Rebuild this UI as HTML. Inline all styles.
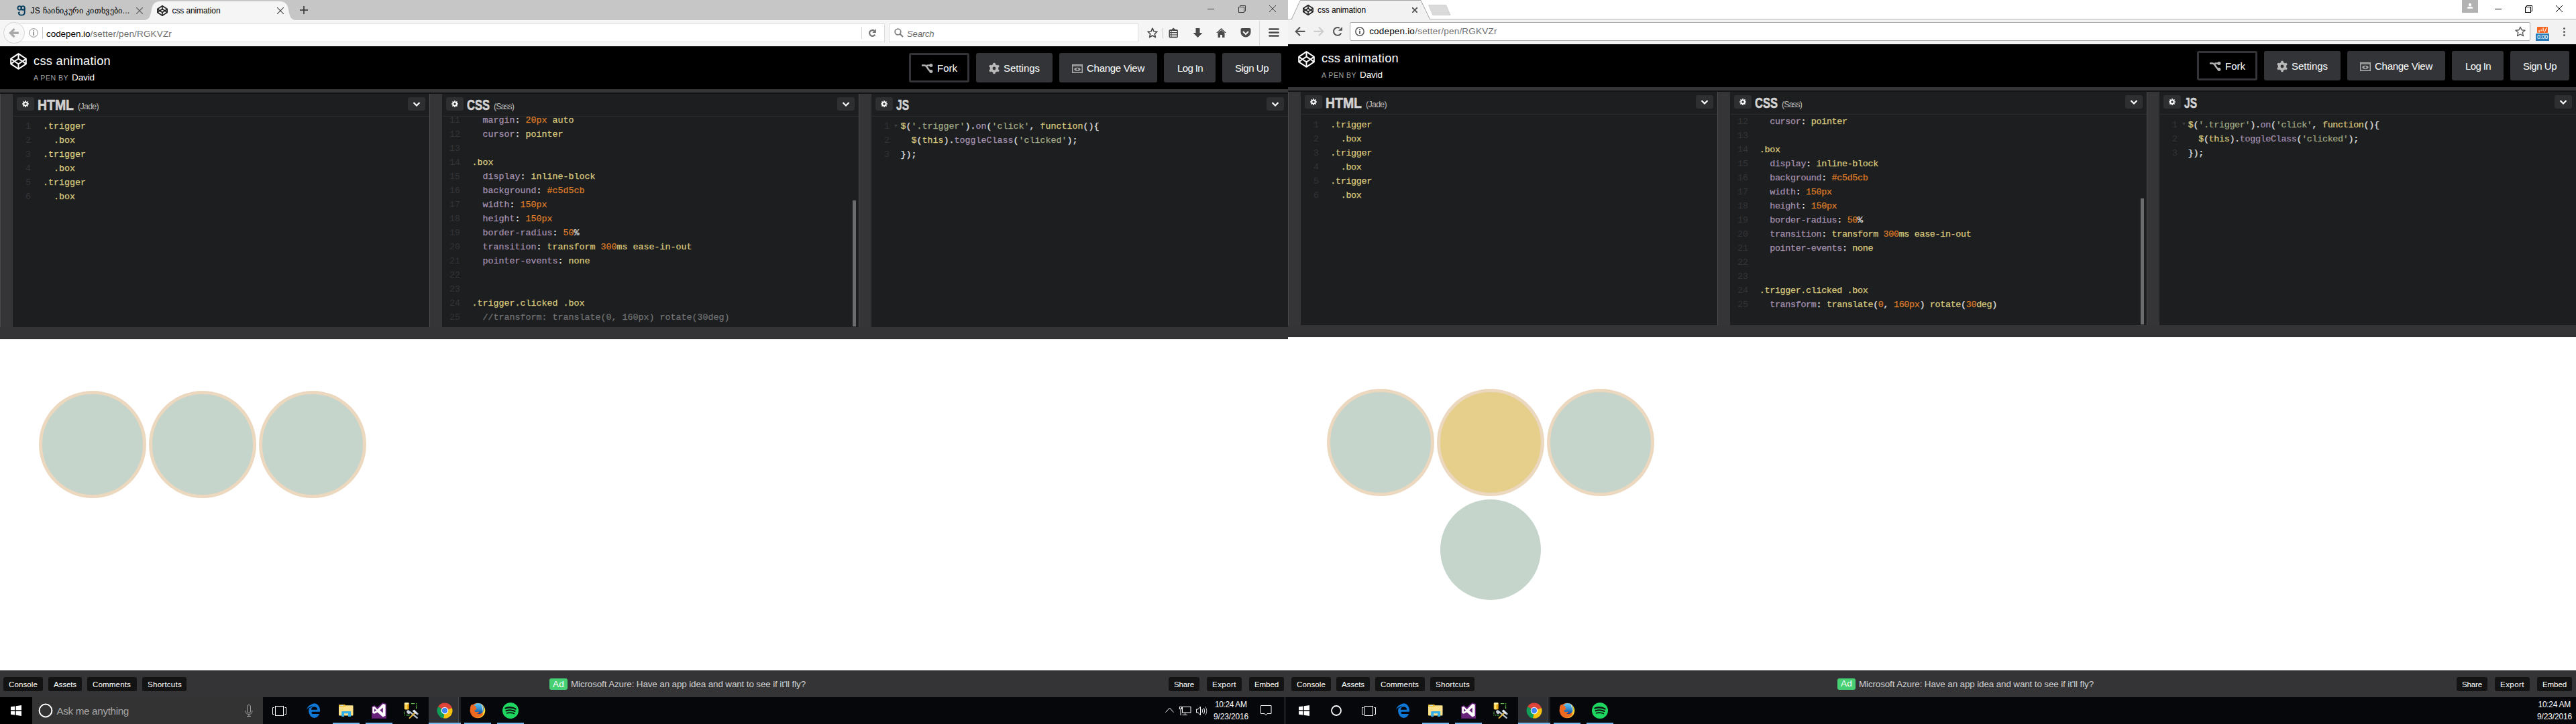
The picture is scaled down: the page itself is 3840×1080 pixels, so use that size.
<!DOCTYPE html><html><head><meta charset="utf-8"><style>html,body{margin:0;padding:0;background:#000;}body{width:3840px;height:1080px;position:relative;overflow:hidden;font-family:"Liberation Sans",sans-serif;}.scr{position:absolute;top:0;width:1920px;height:1080px;overflow:hidden;}.scr div,.scr svg{position:absolute;}.tx{white-space:nowrap;}</style></head><body><div class="scr" style="left:0"><div style="position:absolute;left:0px;top:0px;width:1920px;height:30px;background:#c6c6c6"></div><svg style="position:absolute;left:25px;top:8px;" width="14" height="16" viewBox="0 0 14 16"><g fill="none" stroke="#063f60" stroke-width="1.9"><ellipse cx="4.1" cy="4" rx="2.6" ry="2.9"/><ellipse cx="9.2" cy="4" rx="2.6" ry="2.9"/><path d="M11.7,3.7 L11.7,10.2 C11.7,13.4 9.6,14.6 7.1,14.6 C4.6,14.6 2.9,13.3 2.9,10.9 L4.4,9.9"/><path d="M6.6,6.2 L9.8,6.2"/></g></svg><div id="t1d6ca9dfcb" class="tx" style="left:45.5px;top:9.84px;font-size:12px;line-height:12px;color:#000;font-weight:400;font-family:'Liberation Sans', sans-serif;letter-spacing:0.305px;">JS ჩაინიკური კითხვები...</div><svg style="position:absolute;left:203px;top:11px;" width="10" height="10" viewBox="0 0 10 10"><g stroke="#555" stroke-width="1.1"><line x1="0" y1="0" x2="10" y2="10"/><line x1="10" y1="0" x2="0" y2="10"/></g></svg><svg style="position:absolute;left:200px;top:0px;" width="260" height="30" viewBox="0 0 260 30"><path d="M14,30 C22,30 24,26 26,14 C27.5,6 31,2 39,2 L217,2 C225,2 228.5,6 230,14 C232,26 234,30 242,30 Z" fill="#f5f5f5"/></svg><svg style="position:absolute;left:234px;top:8px;" width="16" height="16" viewBox="0 0 16 16"><g fill="none" stroke="#222" stroke-width="1.6" stroke-linejoin="round"><polygon points="8.00,0.77 15.23,5.50 15.23,10.50 8.00,15.23 0.77,10.50 0.77,5.50"/><polygon points="8.00,5.50 11.90,8.00 8.00,10.50 4.10,8.00"/><line x1="8.0" y1="0.768" x2="8.0" y2="5.504"/><line x1="8.0" y1="10.495999999999999" x2="8.0" y2="15.232000000000001"/><line x1="0.768" y1="5.504" x2="15.232000000000001" y2="10.495999999999999" stroke-opacity="0"/><polyline points="0.77,5.50 4.10,8.00 0.77,10.50"/><polyline points="15.23,5.50 11.90,8.00 15.23,10.50"/></g></svg><div id="tdc792264bf" class="tx" style="left:256.5px;top:9.84px;font-size:12px;line-height:12px;color:#000;font-weight:400;font-family:'Liberation Sans', sans-serif;letter-spacing:-0.106px;">css animation</div><svg style="position:absolute;left:413px;top:11px;" width="10" height="10" viewBox="0 0 10 10"><g stroke="#444" stroke-width="1.1"><line x1="0" y1="0" x2="10" y2="10"/><line x1="10" y1="0" x2="0" y2="10"/></g></svg><svg style="position:absolute;left:447px;top:9px;" width="12" height="12" viewBox="0 0 12 12"><g stroke="#333" stroke-width="1.6"><line x1="6" y1="0" x2="6" y2="12"/><line x1="0" y1="6" x2="12" y2="6"/></g></svg><div style="position:absolute;left:1800px;top:13px;width:10px;height:1px;background:#3a3a3a"></div><svg style="position:absolute;left:1846px;top:8px;" width="11" height="11" viewBox="0 0 11 11"><g fill="none" stroke="#3a3a3a" stroke-width="1"><rect x="0.5" y="2.5" width="8" height="8"/><polyline points="2.5,2.5 2.5,0.5 10.5,0.5 10.5,8.5 8.5,8.5"/></g></svg><svg style="position:absolute;left:1892px;top:8px;" width="10" height="10" viewBox="0 0 10 10"><g stroke="#3a3a3a" stroke-width="1"><line x1="0" y1="0" x2="10" y2="10"/><line x1="10" y1="0" x2="0" y2="10"/></g></svg><div style="position:absolute;left:0px;top:30px;width:1920px;height:39px;background:#f5f5f5"></div><div style="position:absolute;left:21px;top:35px;width:1298px;height:28px;box-sizing:border-box;border:1px solid #dedede;border-left:none;background:#fff"></div><div style="position:absolute;left:5.2px;top:33.2px;width:31.4px;height:31.4px;box-sizing:border-box;border:1px solid #d4d4d4;border-radius:50%;background:#f8f8f8"></div><svg style="position:absolute;left:13px;top:42px;" width="16" height="15" viewBox="0 0 16 15"><g stroke="#a9a9a9" fill="none"><polyline points="8.6,1.2 2.4,7.2 8.6,13.2" stroke-width="3.2"/><line x1="2.8" y1="7.2" x2="14.8" y2="7.2" stroke-width="3.5"/></g></svg><svg style="position:absolute;left:43px;top:42px;" width="14" height="14" viewBox="0 0 14 14"><circle cx="7" cy="7" r="6.3" fill="none" stroke="#8a8a8a" stroke-width="1"/><rect x="6.2" y="6" width="1.7" height="5" fill="#8a8a8a"/><rect x="6.2" y="3.2" width="1.7" height="1.7" fill="#8a8a8a"/></svg><div style="position:absolute;left:63px;top:40px;width:1px;height:18px;background:#c9c9c9"></div><div id="tf65abad30c" class="tx" style="left:69px;top:43.97px;font-size:13.5px;line-height:13.5px;color:#000;font-weight:400;font-family:'Liberation Sans', sans-serif;letter-spacing:-0.056px;white-space:nowrap">codepen.io</div><div id="tc8d14f2a52" class="tx" style="left:134.5px;top:43.97px;font-size:13.5px;line-height:13.5px;color:#6f6f6f;font-weight:400;font-family:'Liberation Sans', sans-serif;letter-spacing:0.164px;white-space:nowrap">/setter/pen/RGKVZr</div><div style="position:absolute;left:1284px;top:40px;width:1px;height:18px;background:#d8d8d8"></div><svg style="position:absolute;left:1294px;top:43px;" width="13" height="13" viewBox="0 0 13 13"><path d="M9.3,3.0 A4.4,4.4 0 1 0 10.3,8.6" fill="none" stroke="#777" stroke-width="2.3"/><polygon points="11.9,0.1 11.9,5.9 6.4,5.9" fill="#777"/></svg><div style="position:absolute;left:1325px;top:35px;width:372px;height:28px;box-sizing:border-box;border:1px solid #dedede;background:#fff"></div><svg style="position:absolute;left:1333px;top:42px;" width="14" height="14" viewBox="0 0 14 14"><circle cx="5.5" cy="5.5" r="4.3" fill="none" stroke="#808080" stroke-width="1.8"/><line x1="8.5" y1="8.5" x2="13" y2="13" stroke="#808080" stroke-width="2.2"/></svg><div id="t6a90bf6b0c" class="tx" style="left:1352px;top:43.62px;font-size:13.2px;line-height:13.2px;color:#6d6d6d;font-weight:400;font-family:'Liberation Sans', sans-serif;font-style:italic;letter-spacing:-0.216px;">Search</div><svg style="position:absolute;left:1710px;top:41px;" width="16" height="16" viewBox="0 0 16 16"><polygon points="8,1.2 10.1,5.8 15,6.2 11.3,9.5 12.4,14.6 8,12 3.6,14.6 4.7,9.5 1,6.2 5.9,5.8" fill="none" stroke="#4a4a4a" stroke-width="1.6" stroke-linejoin="round"/></svg><div style="position:absolute;left:1733px;top:42px;width:1px;height:15px;background:#c3c3c3"></div><svg style="position:absolute;left:1742px;top:41px;" width="15" height="16" viewBox="0 0 15 16"><rect x="0.5" y="3" width="13.5" height="12.5" rx="2" fill="#4a4a4a"/><polygon points="7.2,0.5 10,3 4.5,3" fill="#4a4a4a"/><g fill="#f5f5f5"><rect x="2" y="5" width="1.5" height="2"/><rect x="4.5" y="5" width="8" height="2"/><rect x="2" y="8.3" width="1.5" height="2"/><rect x="4.5" y="8.3" width="8" height="2"/><rect x="2" y="11.6" width="1.5" height="2"/><rect x="4.5" y="11.6" width="8" height="2"/></g></svg><svg style="position:absolute;left:1778px;top:42px;" width="15" height="14" viewBox="0 0 15 14"><polygon points="4.5,0 10.5,0 10.5,7 14.5,7 7.5,14 0.5,7 4.5,7" fill="#4a4a4a"/></svg><svg style="position:absolute;left:1813px;top:42px;" width="15" height="14" viewBox="0 0 15 14"><polygon points="7.5,0 15,7 13,7 7.5,2 2,7 0,7" fill="#4a4a4a"/><polygon points="2.5,7 7.5,2.8 12.5,7 12.5,14 9,14 9,10 6,10 6,14 2.5,14" fill="#4a4a4a"/></svg><svg style="position:absolute;left:1849px;top:42px;" width="16" height="14" viewBox="0 0 16 14"><path d="M0.5,2 Q0.5,0 2.5,0 L13.5,0 Q15.5,0 15.5,2 L15.5,6 A7.5,7.5 0 0 1 0.5,6 Z" fill="#4a4a4a"/><polyline points="4,5 8,9 12,5" fill="none" stroke="#f5f5f5" stroke-width="2"/></svg><div style="position:absolute;left:1877px;top:31px;width:1px;height:37px;background:#dcdcdc"></div><svg style="position:absolute;left:1891px;top:42px;" width="16" height="13" viewBox="0 0 16 13"><g stroke="#4a4a4a" stroke-width="2.6" stroke-linecap="round"><line x1="1.5" y1="1.5" x2="14.5" y2="1.5"/><line x1="1.5" y1="6.5" x2="14.5" y2="6.5"/><line x1="1.5" y1="11.5" x2="14.5" y2="11.5"/></g></svg><div style="position:absolute;left:0px;top:69px;width:1920px;height:64px;background:#000"></div><svg style="position:absolute;left:15px;top:79px;" width="25" height="25" viewBox="0 0 25 25"><g fill="none" stroke="#fff" stroke-width="2.0" stroke-linejoin="round"><polygon points="12.50,1.20 23.80,8.60 23.80,16.40 12.50,23.80 1.20,16.40 1.20,8.60"/><polygon points="12.50,8.60 18.60,12.50 12.50,16.40 6.40,12.50"/><line x1="12.5" y1="1.2" x2="12.5" y2="8.6"/><line x1="12.5" y1="16.4" x2="12.5" y2="23.8"/><line x1="1.2" y1="8.6" x2="23.8" y2="16.4" stroke-opacity="0"/><polyline points="1.20,8.60 6.40,12.50 1.20,16.40"/><polyline points="23.80,8.60 18.60,12.50 23.80,16.40"/></g></svg><div id="t0d46b7834b" class="tx" style="left:50px;top:82.29px;font-size:18.2px;line-height:18.2px;color:#fff;font-weight:400;font-family:'Liberation Sans', sans-serif;letter-spacing:0.292px;">css animation</div><div id="tba9e0ff49e" class="tx" style="left:50px;top:111.03px;font-size:10.6px;line-height:10.6px;color:#a0a0a0;font-weight:400;font-family:'Liberation Sans', sans-serif;letter-spacing:0.463px;">A PEN BY</div><div id="tf5e55506f2" class="tx" style="left:107px;top:109.29px;font-size:13.6px;line-height:13.6px;color:#fff;font-weight:400;font-family:'Liberation Sans', sans-serif;letter-spacing:-0.153px;">David</div><div style="position:absolute;left:1355px;top:79px;width:90px;height:44px;box-sizing:border-box;border:3px solid #333437;border-radius:3px;background:#000"></div><div style="position:absolute;left:1455px;top:79px;width:114px;height:44px;background:#333437;border-radius:3px"></div><div style="position:absolute;left:1579px;top:79px;width:146px;height:44px;background:#333437;border-radius:3px"></div><div style="position:absolute;left:1735px;top:79px;width:77px;height:44px;background:#333437;border-radius:3px"></div><div style="position:absolute;left:1822px;top:79px;width:88px;height:44px;background:#333437;border-radius:3px"></div><svg style="position:absolute;left:1373px;top:94px;" width="18" height="16" viewBox="0 0 18 16"><g fill="none" stroke="#b4b4b4" stroke-width="2.5"><path d="M1,3.6 L5,3.6 C7.5,3.6 8.2,5 10,8 C12,11 13,12.6 14.9,12.6"/><path d="M8.2,3.6 L14.9,3.6"/></g><circle cx="14.9" cy="3.6" r="2.5" fill="#b4b4b4"/><circle cx="14.9" cy="12.6" r="2.5" fill="#b4b4b4"/></svg><div id="tc6f41dcbe7" class="tx" style="left:1397px;top:94.30px;font-size:15px;line-height:15px;color:#fff;font-weight:400;font-family:'Liberation Sans', sans-serif;letter-spacing:0.000px;">Fork</div><svg style="position:absolute;left:1473px;top:93px;" width="18" height="18" viewBox="0 0 18 18"><circle cx="9" cy="9" r="6.23" fill="#b9b9b9"/><rect x="7.28" y="0.80" width="3.44" height="8.20" rx="1.03" fill="#b9b9b9" transform="rotate(0.0 9 9)"/><rect x="7.28" y="0.80" width="3.44" height="8.20" rx="1.03" fill="#b9b9b9" transform="rotate(60.0 9 9)"/><rect x="7.28" y="0.80" width="3.44" height="8.20" rx="1.03" fill="#b9b9b9" transform="rotate(120.0 9 9)"/><rect x="7.28" y="0.80" width="3.44" height="8.20" rx="1.03" fill="#b9b9b9" transform="rotate(180.0 9 9)"/><rect x="7.28" y="0.80" width="3.44" height="8.20" rx="1.03" fill="#b9b9b9" transform="rotate(240.0 9 9)"/><rect x="7.28" y="0.80" width="3.44" height="8.20" rx="1.03" fill="#b9b9b9" transform="rotate(300.0 9 9)"/><circle cx="9" cy="9" r="2.46" fill="#333437"/></svg><div id="tfad9ed803f" class="tx" style="left:1496px;top:94.30px;font-size:15px;line-height:15px;color:#fff;font-weight:400;font-family:'Liberation Sans', sans-serif;letter-spacing:-0.025px;">Settings</div><svg style="position:absolute;left:1598px;top:95.5px;" width="16" height="13" viewBox="0 0 16 13"><rect x="0.75" y="0.75" width="14.5" height="11.5" fill="none" stroke="#a8a8a8" stroke-width="1.5"/><line x1="1" y1="2.2" x2="15" y2="2.2" stroke="#a8a8a8" stroke-width="1.5"/><ellipse cx="8" cy="7.3" rx="4.6" ry="2.6" fill="#a8a8a8"/><circle cx="8" cy="7.3" r="1.5" fill="#333437"/></svg><div id="te60829a1ef" class="tx" style="left:1620px;top:94.30px;font-size:15px;line-height:15px;color:#fff;font-weight:400;font-family:'Liberation Sans', sans-serif;letter-spacing:-0.270px;">Change View</div><div id="t7902f28427" class="tx" style="left:1755px;top:94.30px;font-size:15px;line-height:15px;color:#fff;font-weight:400;font-family:'Liberation Sans', sans-serif;letter-spacing:-0.617px;">Log In</div><div id="tefbf89999e" class="tx" style="left:1841px;top:94.30px;font-size:15px;line-height:15px;color:#fff;font-weight:400;font-family:'Liberation Sans', sans-serif;letter-spacing:-0.482px;">Sign Up</div><div style="position:absolute;left:0px;top:133px;width:1920px;height:5px;background:#353537"></div><div style="position:absolute;left:0px;top:138px;width:1920px;height:2px;background:#141415"></div><div style="position:absolute;left:0px;top:138px;width:19px;height:350px;background:#353537"></div><div style="position:absolute;left:0px;top:138px;width:1px;height:350px;background:#4a4a4c"></div><div style="position:absolute;left:19px;top:140px;width:621px;height:348px;background:#1d1e20;overflow:hidden"></div><div style="position:absolute;left:19px;top:173px;width:621px;height:1px;background:#2a2b2d"></div><svg style="position:absolute;left:25px;top:145px;" width="26" height="20" viewBox="0 0 26 20"><rect x="0" y="0" width="26" height="20" rx="3" fill="#2e2f31"/><circle cx="13" cy="10" r="3.60" fill="#fff"/><rect x="12.15" y="5.00" width="1.70" height="5.00" rx="0.51" fill="#fff" transform="rotate(0.0 13 10)"/><rect x="12.15" y="5.00" width="1.70" height="5.00" rx="0.51" fill="#fff" transform="rotate(45.0 13 10)"/><rect x="12.15" y="5.00" width="1.70" height="5.00" rx="0.51" fill="#fff" transform="rotate(90.0 13 10)"/><rect x="12.15" y="5.00" width="1.70" height="5.00" rx="0.51" fill="#fff" transform="rotate(135.0 13 10)"/><rect x="12.15" y="5.00" width="1.70" height="5.00" rx="0.51" fill="#fff" transform="rotate(180.0 13 10)"/><rect x="12.15" y="5.00" width="1.70" height="5.00" rx="0.51" fill="#fff" transform="rotate(225.0 13 10)"/><rect x="12.15" y="5.00" width="1.70" height="5.00" rx="0.51" fill="#fff" transform="rotate(270.0 13 10)"/><rect x="12.15" y="5.00" width="1.70" height="5.00" rx="0.51" fill="#fff" transform="rotate(315.0 13 10)"/><circle cx="13" cy="10" r="1.70" fill="#2e2f31"/></svg><div id="tf0ba7d6132" class="tx" style="left:56px;top:145.54px;font-size:21.8px;line-height:21.8px;color:#d2d2d2;font-weight:700;font-family:'Liberation Sans', sans-serif;transform:scaleX(0.8921);transform-origin:0 0;-webkit-text-stroke:0.6px #d2d2d2;">HTML</div><div id="tef78362ea7" class="tx" style="left:116px;top:153.10px;font-size:12.4px;line-height:12.4px;color:#bdbdbd;font-weight:400;font-family:'Liberation Sans', sans-serif;letter-spacing:-0.688px;">(Jade)</div><svg style="position:absolute;left:608px;top:145px;" width="26" height="20" viewBox="0 0 26 20"><rect x="0" y="0" width="26" height="20" rx="3" fill="#2e2f31"/><polyline points="8.5,8 13,12.5 17.5,8" fill="none" stroke="#fff" stroke-width="2.2"/></svg><div style="position:absolute;left:640px;top:138px;width:19px;height:350px;background:#353537"></div><div style="position:absolute;left:640px;top:138px;width:1px;height:350px;background:#4a4a4c"></div><div style="position:absolute;left:659px;top:140px;width:621px;height:348px;background:#1d1e20;overflow:hidden"></div><div style="position:absolute;left:659px;top:173px;width:621px;height:1px;background:#2a2b2d"></div><svg style="position:absolute;left:665px;top:145px;" width="26" height="20" viewBox="0 0 26 20"><rect x="0" y="0" width="26" height="20" rx="3" fill="#2e2f31"/><circle cx="13" cy="10" r="3.60" fill="#fff"/><rect x="12.15" y="5.00" width="1.70" height="5.00" rx="0.51" fill="#fff" transform="rotate(0.0 13 10)"/><rect x="12.15" y="5.00" width="1.70" height="5.00" rx="0.51" fill="#fff" transform="rotate(45.0 13 10)"/><rect x="12.15" y="5.00" width="1.70" height="5.00" rx="0.51" fill="#fff" transform="rotate(90.0 13 10)"/><rect x="12.15" y="5.00" width="1.70" height="5.00" rx="0.51" fill="#fff" transform="rotate(135.0 13 10)"/><rect x="12.15" y="5.00" width="1.70" height="5.00" rx="0.51" fill="#fff" transform="rotate(180.0 13 10)"/><rect x="12.15" y="5.00" width="1.70" height="5.00" rx="0.51" fill="#fff" transform="rotate(225.0 13 10)"/><rect x="12.15" y="5.00" width="1.70" height="5.00" rx="0.51" fill="#fff" transform="rotate(270.0 13 10)"/><rect x="12.15" y="5.00" width="1.70" height="5.00" rx="0.51" fill="#fff" transform="rotate(315.0 13 10)"/><circle cx="13" cy="10" r="1.70" fill="#2e2f31"/></svg><div id="t0cad313c49" class="tx" style="left:696px;top:145.54px;font-size:21.8px;line-height:21.8px;color:#d2d2d2;font-weight:700;font-family:'Liberation Sans', sans-serif;transform:scaleX(0.7584);transform-origin:0 0;-webkit-text-stroke:0.6px #d2d2d2;">CSS</div><div id="t3cf34617bd" class="tx" style="left:736px;top:153.10px;font-size:12.4px;line-height:12.4px;color:#bdbdbd;font-weight:400;font-family:'Liberation Sans', sans-serif;letter-spacing:-0.969px;">(Sass)</div><svg style="position:absolute;left:1248px;top:145px;" width="26" height="20" viewBox="0 0 26 20"><rect x="0" y="0" width="26" height="20" rx="3" fill="#2e2f31"/><polyline points="8.5,8 13,12.5 17.5,8" fill="none" stroke="#fff" stroke-width="2.2"/></svg><div style="position:absolute;left:1280px;top:138px;width:19px;height:350px;background:#353537"></div><div style="position:absolute;left:1280px;top:138px;width:1px;height:350px;background:#4a4a4c"></div><div style="position:absolute;left:1299px;top:140px;width:621px;height:348px;background:#1d1e20;overflow:hidden"></div><div style="position:absolute;left:1299px;top:173px;width:621px;height:1px;background:#2a2b2d"></div><svg style="position:absolute;left:1305px;top:145px;" width="26" height="20" viewBox="0 0 26 20"><rect x="0" y="0" width="26" height="20" rx="3" fill="#2e2f31"/><circle cx="13" cy="10" r="3.60" fill="#fff"/><rect x="12.15" y="5.00" width="1.70" height="5.00" rx="0.51" fill="#fff" transform="rotate(0.0 13 10)"/><rect x="12.15" y="5.00" width="1.70" height="5.00" rx="0.51" fill="#fff" transform="rotate(45.0 13 10)"/><rect x="12.15" y="5.00" width="1.70" height="5.00" rx="0.51" fill="#fff" transform="rotate(90.0 13 10)"/><rect x="12.15" y="5.00" width="1.70" height="5.00" rx="0.51" fill="#fff" transform="rotate(135.0 13 10)"/><rect x="12.15" y="5.00" width="1.70" height="5.00" rx="0.51" fill="#fff" transform="rotate(180.0 13 10)"/><rect x="12.15" y="5.00" width="1.70" height="5.00" rx="0.51" fill="#fff" transform="rotate(225.0 13 10)"/><rect x="12.15" y="5.00" width="1.70" height="5.00" rx="0.51" fill="#fff" transform="rotate(270.0 13 10)"/><rect x="12.15" y="5.00" width="1.70" height="5.00" rx="0.51" fill="#fff" transform="rotate(315.0 13 10)"/><circle cx="13" cy="10" r="1.70" fill="#2e2f31"/></svg><div id="t257a75b3f7" class="tx" style="left:1336px;top:145.54px;font-size:21.8px;line-height:21.8px;color:#d2d2d2;font-weight:700;font-family:'Liberation Sans', sans-serif;transform:scaleX(0.7123);transform-origin:0 0;-webkit-text-stroke:0.6px #d2d2d2;">JS</div><svg style="position:absolute;left:1888px;top:145px;" width="26" height="20" viewBox="0 0 26 20"><rect x="0" y="0" width="26" height="20" rx="3" fill="#2e2f31"/><polyline points="8.5,8 13,12.5 17.5,8" fill="none" stroke="#fff" stroke-width="2.2"/></svg><div style="position:absolute;left:640px;top:138px;width:1px;height:350px;background:#4e4e50"></div><div style="position:absolute;left:1280px;top:138px;width:1px;height:350px;background:#4e4e50"></div><div style="position:absolute;left:0px;top:138px;width:1920px;height:2px;background:#141415"></div><div style="position:absolute;left:19px;top:174px;width:621px;height:314px;overflow:hidden"><div class="tx" style="left:-33px;width:60px;text-align:right;top:7.79px;font-size:13.333px;line-height:13.333px;font-family:'Liberation Mono', monospace;color:#333437">1</div><div class="tx" style="left:45px;top:7.79px;font-size:13.333px;line-height:13.333px;font-family:'Liberation Mono', monospace;white-space:pre;letter-spacing:0.000px;-webkit-text-stroke-width:0.25px"><span style="color:#dccb7f">.trigger</span></div><div class="tx" style="left:-33px;width:60px;text-align:right;top:28.79px;font-size:13.333px;line-height:13.333px;font-family:'Liberation Mono', monospace;color:#333437">2</div><div class="tx" style="left:45px;top:28.79px;font-size:13.333px;line-height:13.333px;font-family:'Liberation Mono', monospace;white-space:pre;letter-spacing:0.000px;-webkit-text-stroke-width:0.25px"><span style="color:#dccb7f">  .box</span></div><div class="tx" style="left:-33px;width:60px;text-align:right;top:49.79px;font-size:13.333px;line-height:13.333px;font-family:'Liberation Mono', monospace;color:#333437">3</div><div class="tx" style="left:45px;top:49.79px;font-size:13.333px;line-height:13.333px;font-family:'Liberation Mono', monospace;white-space:pre;letter-spacing:0.000px;-webkit-text-stroke-width:0.25px"><span style="color:#dccb7f">.trigger</span></div><div class="tx" style="left:-33px;width:60px;text-align:right;top:70.79px;font-size:13.333px;line-height:13.333px;font-family:'Liberation Mono', monospace;color:#333437">4</div><div class="tx" style="left:45px;top:70.79px;font-size:13.333px;line-height:13.333px;font-family:'Liberation Mono', monospace;white-space:pre;letter-spacing:0.000px;-webkit-text-stroke-width:0.25px"><span style="color:#dccb7f">  .box</span></div><div class="tx" style="left:-33px;width:60px;text-align:right;top:91.79px;font-size:13.333px;line-height:13.333px;font-family:'Liberation Mono', monospace;color:#333437">5</div><div class="tx" style="left:45px;top:91.79px;font-size:13.333px;line-height:13.333px;font-family:'Liberation Mono', monospace;white-space:pre;letter-spacing:0.000px;-webkit-text-stroke-width:0.25px"><span style="color:#dccb7f">.trigger</span></div><div class="tx" style="left:-33px;width:60px;text-align:right;top:112.79px;font-size:13.333px;line-height:13.333px;font-family:'Liberation Mono', monospace;color:#333437">6</div><div class="tx" style="left:45px;top:112.79px;font-size:13.333px;line-height:13.333px;font-family:'Liberation Mono', monospace;white-space:pre;letter-spacing:0.000px;-webkit-text-stroke-width:0.25px"><span style="color:#dccb7f">  .box</span></div></div><div style="position:absolute;left:659px;top:174px;width:621px;height:314px;overflow:hidden"><div class="tx" style="left:-33px;width:60px;text-align:right;top:-22.21px;font-size:13.333px;line-height:13.333px;font-family:'Liberation Mono', monospace;color:#333437">10</div><div class="tx" style="left:44.5px;top:-22.21px;font-size:13.333px;line-height:13.333px;font-family:'Liberation Mono', monospace;white-space:pre;letter-spacing:0.000px;-webkit-text-stroke-width:0.25px"><span style="color:#e0e0e0">  </span><span style="color:#a592b1">display</span><span style="color:#e0e0e0">: </span><span style="color:#dccb7f">inline-block</span></div><div class="tx" style="left:-33px;width:60px;text-align:right;top:-1.21px;font-size:13.333px;line-height:13.333px;font-family:'Liberation Mono', monospace;color:#333437">11</div><div class="tx" style="left:44.5px;top:-1.21px;font-size:13.333px;line-height:13.333px;font-family:'Liberation Mono', monospace;white-space:pre;letter-spacing:0.000px;-webkit-text-stroke-width:0.25px"><span style="color:#e0e0e0">  </span><span style="color:#a592b1">margin</span><span style="color:#e0e0e0">: </span><span style="color:#dd7c28">20px</span><span style="color:#e0e0e0"> </span><span style="color:#dccb7f">auto</span></div><div class="tx" style="left:-33px;width:60px;text-align:right;top:19.79px;font-size:13.333px;line-height:13.333px;font-family:'Liberation Mono', monospace;color:#333437">12</div><div class="tx" style="left:44.5px;top:19.79px;font-size:13.333px;line-height:13.333px;font-family:'Liberation Mono', monospace;white-space:pre;letter-spacing:0.000px;-webkit-text-stroke-width:0.25px"><span style="color:#e0e0e0">  </span><span style="color:#a592b1">cursor</span><span style="color:#e0e0e0">: </span><span style="color:#dccb7f">pointer</span></div><div class="tx" style="left:-33px;width:60px;text-align:right;top:40.79px;font-size:13.333px;line-height:13.333px;font-family:'Liberation Mono', monospace;color:#333437">13</div><div class="tx" style="left:44.5px;top:40.79px;font-size:13.333px;line-height:13.333px;font-family:'Liberation Mono', monospace;white-space:pre;letter-spacing:0.000px;-webkit-text-stroke-width:0.25px"></div><div class="tx" style="left:-33px;width:60px;text-align:right;top:61.79px;font-size:13.333px;line-height:13.333px;font-family:'Liberation Mono', monospace;color:#333437">14</div><div class="tx" style="left:44.5px;top:61.79px;font-size:13.333px;line-height:13.333px;font-family:'Liberation Mono', monospace;white-space:pre;letter-spacing:0.000px;-webkit-text-stroke-width:0.25px"><span style="color:#dccb7f">.box</span></div><div class="tx" style="left:-33px;width:60px;text-align:right;top:82.79px;font-size:13.333px;line-height:13.333px;font-family:'Liberation Mono', monospace;color:#333437">15</div><div class="tx" style="left:44.5px;top:82.79px;font-size:13.333px;line-height:13.333px;font-family:'Liberation Mono', monospace;white-space:pre;letter-spacing:0.000px;-webkit-text-stroke-width:0.25px"><span style="color:#e0e0e0">  </span><span style="color:#a592b1">display</span><span style="color:#e0e0e0">: </span><span style="color:#dccb7f">inline-block</span></div><div class="tx" style="left:-33px;width:60px;text-align:right;top:103.79px;font-size:13.333px;line-height:13.333px;font-family:'Liberation Mono', monospace;color:#333437">16</div><div class="tx" style="left:44.5px;top:103.79px;font-size:13.333px;line-height:13.333px;font-family:'Liberation Mono', monospace;white-space:pre;letter-spacing:0.000px;-webkit-text-stroke-width:0.25px"><span style="color:#e0e0e0">  </span><span style="color:#a592b1">background</span><span style="color:#e0e0e0">: </span><span style="color:#dd7c28">#c5d5cb</span></div><div class="tx" style="left:-33px;width:60px;text-align:right;top:124.79px;font-size:13.333px;line-height:13.333px;font-family:'Liberation Mono', monospace;color:#333437">17</div><div class="tx" style="left:44.5px;top:124.79px;font-size:13.333px;line-height:13.333px;font-family:'Liberation Mono', monospace;white-space:pre;letter-spacing:0.000px;-webkit-text-stroke-width:0.25px"><span style="color:#e0e0e0">  </span><span style="color:#a592b1">width</span><span style="color:#e0e0e0">: </span><span style="color:#dd7c28">150px</span></div><div class="tx" style="left:-33px;width:60px;text-align:right;top:145.79px;font-size:13.333px;line-height:13.333px;font-family:'Liberation Mono', monospace;color:#333437">18</div><div class="tx" style="left:44.5px;top:145.79px;font-size:13.333px;line-height:13.333px;font-family:'Liberation Mono', monospace;white-space:pre;letter-spacing:0.000px;-webkit-text-stroke-width:0.25px"><span style="color:#e0e0e0">  </span><span style="color:#a592b1">height</span><span style="color:#e0e0e0">: </span><span style="color:#dd7c28">150px</span></div><div class="tx" style="left:-33px;width:60px;text-align:right;top:166.79px;font-size:13.333px;line-height:13.333px;font-family:'Liberation Mono', monospace;color:#333437">19</div><div class="tx" style="left:44.5px;top:166.79px;font-size:13.333px;line-height:13.333px;font-family:'Liberation Mono', monospace;white-space:pre;letter-spacing:0.000px;-webkit-text-stroke-width:0.25px"><span style="color:#e0e0e0">  </span><span style="color:#a592b1">border-radius</span><span style="color:#e0e0e0">: </span><span style="color:#dd7c28">50</span><span style="color:#e0e0e0">%</span></div><div class="tx" style="left:-33px;width:60px;text-align:right;top:187.79px;font-size:13.333px;line-height:13.333px;font-family:'Liberation Mono', monospace;color:#333437">20</div><div class="tx" style="left:44.5px;top:187.79px;font-size:13.333px;line-height:13.333px;font-family:'Liberation Mono', monospace;white-space:pre;letter-spacing:0.000px;-webkit-text-stroke-width:0.25px"><span style="color:#e0e0e0">  </span><span style="color:#a592b1">transition</span><span style="color:#e0e0e0">: </span><span style="color:#dccb7f">transform</span><span style="color:#e0e0e0"> </span><span style="color:#dd7c28">300</span><span style="color:#dccb7f">ms</span><span style="color:#e0e0e0"> </span><span style="color:#dccb7f">ease-in-out</span></div><div class="tx" style="left:-33px;width:60px;text-align:right;top:208.79px;font-size:13.333px;line-height:13.333px;font-family:'Liberation Mono', monospace;color:#333437">21</div><div class="tx" style="left:44.5px;top:208.79px;font-size:13.333px;line-height:13.333px;font-family:'Liberation Mono', monospace;white-space:pre;letter-spacing:0.000px;-webkit-text-stroke-width:0.25px"><span style="color:#e0e0e0">  </span><span style="color:#a592b1">pointer-events</span><span style="color:#e0e0e0">: </span><span style="color:#dccb7f">none</span></div><div class="tx" style="left:-33px;width:60px;text-align:right;top:229.79px;font-size:13.333px;line-height:13.333px;font-family:'Liberation Mono', monospace;color:#333437">22</div><div class="tx" style="left:44.5px;top:229.79px;font-size:13.333px;line-height:13.333px;font-family:'Liberation Mono', monospace;white-space:pre;letter-spacing:0.000px;-webkit-text-stroke-width:0.25px"></div><div class="tx" style="left:-33px;width:60px;text-align:right;top:250.79px;font-size:13.333px;line-height:13.333px;font-family:'Liberation Mono', monospace;color:#333437">23</div><div class="tx" style="left:44.5px;top:250.79px;font-size:13.333px;line-height:13.333px;font-family:'Liberation Mono', monospace;white-space:pre;letter-spacing:0.000px;-webkit-text-stroke-width:0.25px"></div><div class="tx" style="left:-33px;width:60px;text-align:right;top:271.79px;font-size:13.333px;line-height:13.333px;font-family:'Liberation Mono', monospace;color:#333437">24</div><div class="tx" style="left:44.5px;top:271.79px;font-size:13.333px;line-height:13.333px;font-family:'Liberation Mono', monospace;white-space:pre;letter-spacing:0.000px;-webkit-text-stroke-width:0.25px"><span style="color:#dccb7f">.trigger.clicked .box</span></div><div class="tx" style="left:-33px;width:60px;text-align:right;top:292.79px;font-size:13.333px;line-height:13.333px;font-family:'Liberation Mono', monospace;color:#333437">25</div><div class="tx" style="left:44.5px;top:292.79px;font-size:13.333px;line-height:13.333px;font-family:'Liberation Mono', monospace;white-space:pre;letter-spacing:0.000px;-webkit-text-stroke-width:0.25px"><span style="color:#727272">  //transform: translate(0, 160px) rotate(30deg)</span></div></div><div style="position:absolute;left:1271px;top:299px;width:5px;height:188px;background:#6c6c6c"></div><div style="position:absolute;left:1299px;top:174px;width:621px;height:314px;overflow:hidden"><div class="tx" style="left:-33px;width:60px;text-align:right;top:7.79px;font-size:13.333px;line-height:13.333px;font-family:'Liberation Mono', monospace;color:#333437">1</div><div class="tx" style="left:43.5px;top:7.79px;font-size:13.333px;line-height:13.333px;font-family:'Liberation Mono', monospace;white-space:pre;letter-spacing:0.000px;-webkit-text-stroke-width:0.25px"><span style="color:#dccb7f">$</span><span style="color:#e0e0e0">(</span><span style="color:#a3ab86">'.trigger'</span><span style="color:#e0e0e0">)</span><span style="color:#e0e0e0">.</span><span style="color:#a592b1">on</span><span style="color:#e0e0e0">(</span><span style="color:#a3ab86">'click'</span><span style="color:#e0e0e0">, </span><span style="color:#dccb7f">function</span><span style="color:#e0e0e0">(){</span></div><div class="tx" style="left:-33px;width:60px;text-align:right;top:28.79px;font-size:13.333px;line-height:13.333px;font-family:'Liberation Mono', monospace;color:#333437">2</div><div class="tx" style="left:43.5px;top:28.79px;font-size:13.333px;line-height:13.333px;font-family:'Liberation Mono', monospace;white-space:pre;letter-spacing:0.000px;-webkit-text-stroke-width:0.25px"><span style="color:#e0e0e0">  </span><span style="color:#dccb7f">$</span><span style="color:#e0e0e0">(</span><span style="color:#dccb7f">this</span><span style="color:#e0e0e0">)</span><span style="color:#e0e0e0">.</span><span style="color:#a592b1">toggleClass</span><span style="color:#e0e0e0">(</span><span style="color:#a3ab86">'clicked'</span><span style="color:#e0e0e0">);</span></div><div class="tx" style="left:-33px;width:60px;text-align:right;top:49.79px;font-size:13.333px;line-height:13.333px;font-family:'Liberation Mono', monospace;color:#333437">3</div><div class="tx" style="left:43.5px;top:49.79px;font-size:13.333px;line-height:13.333px;font-family:'Liberation Mono', monospace;white-space:pre;letter-spacing:0.000px;-webkit-text-stroke-width:0.25px"><span style="color:#e0e0e0">});</span></div><svg style="position:absolute;left:34px;top:12px;" width="5" height="4" viewBox="0 0 5 4"><polygon points="0,0 5,0 2.5,4" fill="#3e3f41"/></svg></div><div style="position:absolute;left:0px;top:488px;width:1920px;height:16px;background:#343436"></div><div style="position:absolute;left:0px;top:504px;width:1920px;height:1px;background:#000"></div><div style="position:absolute;left:0px;top:505px;width:1920px;height:1px;background:#6a6a6a"></div><div style="position:absolute;left:0px;top:506px;width:1920px;height:494px;background:#fff"></div><div style="position:absolute;left:58px;top:583px;width:160px;height:160px;box-sizing:border-box;border:5px solid #ebd8bf;border-radius:50%;background:#c5d5cb"></div><div style="position:absolute;left:222px;top:583px;width:160px;height:160px;box-sizing:border-box;border:5px solid #ebd8bf;border-radius:50%;background:#c5d5cb"></div><div style="position:absolute;left:386px;top:583px;width:160px;height:160px;box-sizing:border-box;border:5px solid #ebd8bf;border-radius:50%;background:#c5d5cb"></div><div style="position:absolute;left:0px;top:1000px;width:1920px;height:40px;background:#343436"></div><div style="position:absolute;left:5px;top:1010px;width:59px;height:21px;background:#131314;border-radius:3px"></div><div id="tbda0d0c456" class="tx" style="left:13px;top:1015.18px;font-size:11.6px;line-height:11.6px;color:#fff;font-weight:400;font-family:'Liberation Sans', sans-serif;letter-spacing:0.065px;">Console</div><div style="position:absolute;left:72px;top:1010px;width:50px;height:21px;background:#131314;border-radius:3px"></div><div id="t57291a721c" class="tx" style="left:80px;top:1015.18px;font-size:11.6px;line-height:11.6px;color:#fff;font-weight:400;font-family:'Liberation Sans', sans-serif;letter-spacing:-0.133px;">Assets</div><div style="position:absolute;left:130px;top:1010px;width:74px;height:21px;background:#131314;border-radius:3px"></div><div id="t4354915cce" class="tx" style="left:138px;top:1015.18px;font-size:11.6px;line-height:11.6px;color:#fff;font-weight:400;font-family:'Liberation Sans', sans-serif;letter-spacing:0.117px;">Comments</div><div style="position:absolute;left:212px;top:1010px;width:66px;height:21px;background:#131314;border-radius:3px"></div><div id="t47fc4de78f" class="tx" style="left:220px;top:1015.18px;font-size:11.6px;line-height:11.6px;color:#fff;font-weight:400;font-family:'Liberation Sans', sans-serif;letter-spacing:0.224px;">Shortcuts</div><div style="position:absolute;left:1742px;top:1010px;width:46px;height:21px;background:#131314;border-radius:3px"></div><div id="t7a724faf32" class="tx" style="left:1750px;top:1015.18px;font-size:11.6px;line-height:11.6px;color:#fff;font-weight:400;font-family:'Liberation Sans', sans-serif;letter-spacing:-0.188px;">Share</div><div style="position:absolute;left:1799px;top:1010px;width:52px;height:21px;background:#131314;border-radius:3px"></div><div id="t10c9bdf545" class="tx" style="left:1807px;top:1015.18px;font-size:11.6px;line-height:11.6px;color:#fff;font-weight:400;font-family:'Liberation Sans', sans-serif;letter-spacing:0.414px;">Export</div><div style="position:absolute;left:1862px;top:1010px;width:52px;height:21px;background:#131314;border-radius:3px"></div><div id="ta988d7e062" class="tx" style="left:1870px;top:1015.18px;font-size:11.6px;line-height:11.6px;color:#fff;font-weight:400;font-family:'Liberation Sans', sans-serif;letter-spacing:-0.147px;">Embed</div><div style="position:absolute;left:819px;top:1012px;width:27px;height:17px;background:#47cf73;border-radius:3px"></div><div id="t3ec698897f" class="tx" style="left:824px;top:1014.09px;font-size:13.6px;line-height:13.6px;color:#fff;font-weight:400;font-family:'Liberation Sans', sans-serif;letter-spacing:0.180px;">Ad</div><div id="tc0448246d5" class="tx" style="left:851px;top:1014.25px;font-size:13.4px;line-height:13.4px;color:#d2d2d2;font-weight:400;font-family:'Liberation Sans', sans-serif;letter-spacing:-0.109px;">Microsoft Azure: Have an app idea and want to see if it'll fly?</div><div style="position:absolute;left:0px;top:1040px;width:1920px;height:40px;background:#05070b"></div><div style="position:absolute;left:0px;top:1040px;width:48px;height:40px;background:#000"></div><svg style="position:absolute;left:16px;top:1052px;" width="16" height="16" viewBox="0 0 16 16"><g fill="#fff"><polygon points="0,2.3 6.3,1.4 6.3,7.3 0,7.3"/><polygon points="7.7,1.2 16,0 16,7.3 7.7,7.3"/><polygon points="0,8.7 6.3,8.7 6.3,14.6 0,13.7"/><polygon points="7.7,8.7 16,8.7 16,16 7.7,14.8"/></g></svg><div style="position:absolute;left:48px;top:1040px;width:344px;height:40px;background:#333"></div><svg style="position:absolute;left:57px;top:1049px;" width="22" height="22" viewBox="0 0 22 22"><circle cx="11" cy="11" r="9.4" fill="none" stroke="#fff" stroke-width="2"/></svg><div id="t45d0c09ff8" class="tx" style="left:84.5px;top:1053.13px;font-size:15.2px;line-height:15.2px;color:#a6a6a6;font-weight:400;font-family:'Liberation Sans', sans-serif;letter-spacing:-0.319px;">Ask me anything</div><svg style="position:absolute;left:365px;top:1051px;" width="12" height="19" viewBox="0 0 12 19"><g fill="none" stroke="#a0a0a0" stroke-width="1"><rect x="3.5" y="0.5" width="5" height="12" rx="2.5"/><path d="M1,9 Q1,14.5 6,14.5 Q11,14.5 11,9"/><line x1="6" y1="14.5" x2="6" y2="17.5"/><line x1="3" y1="17.5" x2="9" y2="17.5"/></g></svg><div style="position:absolute;left:639px;top:1040px;width:44px;height:40px;background:#303134"></div><div style="position:absolute;left:683px;top:1040px;width:1px;height:40px;background:#46474a"></div><div style="position:absolute;left:684px;top:1040px;width:3px;height:40px;background:#1e1f22"></div><svg style="position:absolute;left:406px;top:1053px;" width="21" height="15" viewBox="0 0 21 15"><g fill="none" stroke="#fff" stroke-width="1"><rect x="4.5" y="0.5" width="12" height="14"/><polyline points="2.5,2.5 0.5,2.5 0.5,12.5 2.5,12.5"/><polyline points="18.5,2.5 20.5,2.5 20.5,12.5 18.5,12.5"/></g></svg><svg style="position:absolute;left:457px;top:1048.9px;" width="21" height="23" viewBox="0 0 21 23"><ellipse cx="11.6" cy="11.2" rx="8.55" ry="10.85" fill="#0f78d7"/><path d="M7,9.8 C7,6.8 9.2,5.2 11.6,5.2 C14,5.2 16.2,6.8 16.2,9.8 Z" fill="#03050a"/><path d="M21,12.8 L8,12.8 C7.4,13.8 7.5,15 8.3,16 L21,16 Z" fill="#03050a"/><path d="M0.2,10.2 C0.9,6 3.8,2.6 8.6,1.6 L9.2,4.6 C5.2,5.2 2.2,7.2 0.2,10.2 Z" fill="#0f78d7"/><path d="M0.6,10 C2.4,7.4 5,5.6 8.6,5" fill="none" stroke="#03050a" stroke-width="1.1"/></svg><svg style="position:absolute;left:505.25px;top:1051px;" width="22" height="19" viewBox="0 0 22 19"><rect x="0" y="1.2" width="21.5" height="15.2" rx="0.8" fill="#fde18a"/><path d="M0,2.9 L0,0.9 Q0,0 0.9,0 L9.2,0 L10.6,1.6 L10.6,2.9 Z" fill="#f1c232"/><rect x="2.2" y="1" width="4.8" height="1" fill="#bfe3f0"/><path d="M4.2,18 L4.2,11 Q4.2,10 5.2,10 L17.1,10 Q18.1,10 18.1,11 L18.1,18 L14,18 L14,13.3 L8.2,13.3 L8.2,18 Z" fill="#35aee8"/></svg><svg style="position:absolute;left:553.8px;top:1048.15px;" width="23" height="24" viewBox="0 0 23 24"><polygon points="0.2,6 4,4 8.4,7.1 16.6,0 22.1,2 22.1,23.7 0.2,23.7" fill="#68217a"/><path d="M1.33,6.86 L3.98,5.75 L8.63,10.18 L16.8,1.99 L20.6,2.88 L20.6,19.7 L16.8,21.5 L8.63,14.4 L3.98,16.8 L1.33,15.7 Z M3.98,9.07 L3.98,14 L7.08,11.5 Z M12.2,11.5 L16.8,15.5 L16.8,7.52 Z" fill="#fff" fill-rule="evenodd"/></svg><svg style="position:absolute;left:602px;top:1048px;" width="25" height="25" viewBox="0 0 25 25"><defs><linearGradient id="tcyl" x1="0" x2="1"><stop offset="0" stop-color="#f0c030"/><stop offset="0.4" stop-color="#fbe07a"/><stop offset="0.6" stop-color="#f3b51c"/><stop offset="1" stop-color="#d99000"/></linearGradient></defs><rect x="0.7" y="0" width="7.1" height="10.4" rx="1.6" fill="url(#tcyl)"/><ellipse cx="4.25" cy="1.4" rx="3.3" ry="1.3" fill="#fff3b0"/><g fill="#5cc84a"><rect x="10.8" y="1" width="5.5" height="1.2"/><rect x="18" y="1" width="1.2" height="1.2"/><rect x="18" y="3.4" width="1.2" height="1.2"/><rect x="18" y="5.5" width="1.2" height="3.6"/><rect x="0.4" y="13.5" width="1.2" height="1.5"/><rect x="0.4" y="16" width="1.2" height="1.2"/><rect x="0.4" y="18.2" width="1.2" height="1.2"/><rect x="3" y="18.2" width="1.2" height="1.2"/><rect x="5" y="18.2" width="3.8" height="1.2"/></g><line x1="8.6" y1="13.6" x2="19.8" y2="22.8" stroke="#b9c3cf" stroke-width="2.3" stroke-linecap="round"/><path d="M4.8,11.8 A3.2,3.2 0 1 0 10.5,14.2 L8.6,13.6 L7.4,11 Z" fill="#c8d0da"/><line x1="8.6" y1="23" x2="16.5" y2="15.6" stroke="#e3b33a" stroke-width="2" stroke-linecap="round"/><path d="M12.5,12.8 L15.5,10.6 L21.8,16.8 L20.2,18.8 L16.8,16.2 Z" fill="#dfe6ee"/><path d="M18.5,16.5 L21.8,16.8 L20.2,18.8 Z" fill="#8d9aa8"/></svg><svg style="position:absolute;left:0;top:0" width="1920" height="1080"><path d="M663,1060 L653.04,1054.25 A11.5,11.5 0 0 1 673.81,1056.07 Z" fill="#db4437"/><path d="M663,1060 L673.81,1056.07 A11.5,11.5 0 0 1 661.00,1071.33 Z" fill="#f4c20d"/><path d="M663,1060 L661.00,1071.33 A11.5,11.5 0 0 1 653.04,1054.25 Z" fill="#0f9d58"/><circle cx="663" cy="1060" r="5.29" fill="#fff"/><circle cx="663" cy="1060" r="4.14" fill="#4285f4"/><defs><linearGradient id="ffo" x1="0" y1="0" x2="1" y2="0.3"><stop offset="0" stop-color="#e2481b"/><stop offset="0.6" stop-color="#f27a20"/><stop offset="1" stop-color="#ffd52e"/></linearGradient><linearGradient id="ffb" x1="0" y1="0" x2="0" y2="1"><stop offset="0" stop-color="#5fcaf4"/><stop offset="0.55" stop-color="#2a87d0"/><stop offset="1" stop-color="#173a88"/></linearGradient></defs><circle cx="712" cy="1060" r="11.3" fill="url(#ffo)"/><circle cx="712.9" cy="1057.4" r="8.4" fill="url(#ffb)"/><polygon points="701.10,1054.70 702.10,1051.80 704.30,1050.90 706.55,1053.10 708.80,1052.50 709.60,1055.80 711.00,1056.20 708.80,1059.10 707.00,1060.00 708.80,1062.20 713.20,1061.70 714.10,1063.10 710.50,1065.30 716.70,1065.10 719.40,1062.20 719.80,1066.70 712.80,1070.70 704.80,1067.70 700.80,1060.70" fill="#ee6a20"/><path d="M717.3,1050.2 Q721.3,1053.7 720.0,1063.2 Q719.3,1056.7 717.3,1050.2 Z" fill="#fff6c0" fill-opacity="0.85"/><circle cx="761" cy="1060" r="12" fill="#1ed760"/><g fill="none" stroke="#111" stroke-linecap="round"><path d="M753.5,1056.5 Q761,1053.5 768.5,1057.5" stroke-width="2.4"/><path d="M754.5,1060.3 Q761,1058 767.5,1061" stroke-width="2"/><path d="M755.5,1063.8 Q761,1062 766.5,1064.5" stroke-width="1.7"/></g></svg><div style="position:absolute;left:496px;top:1078px;width:40px;height:2px;background:#76b9ed"></div><div style="position:absolute;left:545px;top:1078px;width:40px;height:2px;background:#76b9ed"></div><div style="position:absolute;left:639px;top:1078px;width:48px;height:2px;background:#76b9ed"></div><div style="position:absolute;left:692px;top:1078px;width:40px;height:2px;background:#76b9ed"></div><div style="position:absolute;left:741px;top:1078px;width:40px;height:2px;background:#76b9ed"></div><svg style="position:absolute;left:1737px;top:1055px;" width="13" height="8" viewBox="0 0 13 8"><polyline points="0.5,7.5 6.5,1 12.5,7.5" fill="none" stroke="#fff" stroke-width="1"/></svg><svg style="position:absolute;left:1758px;top:1054px;" width="18" height="14" viewBox="0 0 18 14"><g fill="none" stroke="#fff" stroke-width="1"><rect x="4.5" y="0.5" width="12.5" height="8.5"/><rect x="0.5" y="0.5" width="3" height="3"/><line x1="2" y1="3.5" x2="2" y2="13"/><line x1="4.5" y1="12.5" x2="12" y2="12.5"/><line x1="8.5" y1="9" x2="8.5" y2="12.5"/></g></svg><svg style="position:absolute;left:1783px;top:1053px;" width="17" height="15" viewBox="0 0 17 15"><g fill="none" stroke="#fff" stroke-width="1"><path d="M0.5,5 L3,5 L6.5,1 L6.5,14 L3,10 L0.5,10 Z"/><path d="M9,5 Q10.5,7.5 9,10" /><path d="M11.5,3 Q14,7.5 11.5,12"/><path d="M14,1 Q17.5,7.5 14,14" stroke-opacity="0.7"/></g></svg><div id="t56ecbe844e" class="tx" style="left:1811px;top:1044.64px;font-size:12px;line-height:12px;color:#fff;font-weight:400;font-family:'Liberation Sans', sans-serif;letter-spacing:-0.402px;">10:24 AM</div><div id="t9c7fd30784" class="tx" style="left:1809px;top:1062.64px;font-size:12px;line-height:12px;color:#fff;font-weight:400;font-family:'Liberation Sans', sans-serif;letter-spacing:-0.155px;">9/23/2016</div><svg style="position:absolute;left:1879px;top:1052px;" width="17" height="17" viewBox="0 0 17 17"><path d="M0.5,0.5 L16,0.5 L16,12.5 L10,12.5 L8,15 L6,12.5 L0.5,12.5 Z" fill="none" stroke="#fff" stroke-width="1"/></svg><div style="position:absolute;left:1915px;top:1040px;width:1px;height:40px;background:#555"></div></div><div class="scr" style="left:1920px"><div style="position:absolute;left:0px;top:0px;width:1920px;height:29px;background:#fff"></div><div style="position:absolute;left:0px;top:28px;width:1920px;height:1px;background:#b4b4b4"></div><svg style="position:absolute;left:0px;top:0px;" width="260" height="30" viewBox="0 0 260 30"><polygon points="5.2,28.8 18.3,0.5 198,0.5 211.6,28.8" fill="#f2f2f2" stroke="#a5a5a5" stroke-width="1"/><rect x="6.5" y="27.6" width="204" height="2.4" fill="#f2f2f2"/><polygon points="209.5,7.5 235.5,7.5 242,22.5 216,22.5" fill="#dadada" stroke="#cfcfcf" stroke-width="1" stroke-linejoin="round"/></svg><svg style="position:absolute;left:22px;top:7px;" width="16" height="16" viewBox="0 0 16 16"><g fill="none" stroke="#222" stroke-width="1.6" stroke-linejoin="round"><polygon points="8.00,0.77 15.23,5.50 15.23,10.50 8.00,15.23 0.77,10.50 0.77,5.50"/><polygon points="8.00,5.50 11.90,8.00 8.00,10.50 4.10,8.00"/><line x1="8.0" y1="0.768" x2="8.0" y2="5.504"/><line x1="8.0" y1="10.495999999999999" x2="8.0" y2="15.232000000000001"/><line x1="0.768" y1="5.504" x2="15.232000000000001" y2="10.495999999999999" stroke-opacity="0"/><polyline points="0.77,5.50 4.10,8.00 0.77,10.50"/><polyline points="15.23,5.50 11.90,8.00 15.23,10.50"/></g></svg><div id="t9993ea4f4b" class="tx" style="left:44px;top:9.34px;font-size:12px;line-height:12px;color:#000;font-weight:400;font-family:'Liberation Sans', sans-serif;letter-spacing:-0.106px;">css animation</div><svg style="position:absolute;left:185px;top:11px;" width="8" height="8" viewBox="0 0 8 8"><g stroke="#505050" stroke-width="1.9"><line x1="0" y1="0" x2="8" y2="8"/><line x1="8" y1="0" x2="0" y2="8"/></g></svg><div style="position:absolute;left:1750px;top:0px;width:24px;height:19px;background:#b2b2b2"></div><svg style="position:absolute;left:1756px;top:3px;" width="12" height="12" viewBox="0 0 12 12"><circle cx="6" cy="4" r="2.2" fill="#fff"/><path d="M1.5,9.8 Q1.5,6.8 6,6.8 Q10.5,6.8 10.5,9.8 Z" fill="#fff"/></svg><div style="position:absolute;left:1799px;top:13px;width:10px;height:1px;background:#000"></div><svg style="position:absolute;left:1844px;top:8px;" width="11" height="11" viewBox="0 0 11 11"><g fill="none" stroke="#000" stroke-width="1"><rect x="0.5" y="2.5" width="8" height="8"/><polyline points="2.5,2.5 2.5,0.5 10.5,0.5 10.5,8.5 8.5,8.5"/></g></svg><svg style="position:absolute;left:1890px;top:8px;" width="10" height="10" viewBox="0 0 10 10"><g stroke="#000" stroke-width="1"><line x1="0" y1="0" x2="10" y2="10"/><line x1="10" y1="0" x2="0" y2="10"/></g></svg><div style="position:absolute;left:0px;top:29px;width:1920px;height:37px;background:#f2f2f2"></div><svg style="position:absolute;left:10px;top:39px;" width="16" height="16" viewBox="0 0 16 16"><g fill="none" stroke="#555" stroke-width="2.1" stroke-linecap="round"><line x1="2" y1="7.9" x2="14.6" y2="7.9"/><polyline points="8,1.6 1.7,7.9 8,14.2" stroke-linecap="butt"/></g></svg><svg style="position:absolute;left:38px;top:39px;" width="16" height="16" viewBox="0 0 16 16"><g fill="none" stroke="#cdcdcd" stroke-width="2.1" stroke-linecap="round"><line x1="1.2" y1="7.9" x2="14" y2="7.9"/><polyline points="8,1.6 14.3,7.9 8,14.2" stroke-linecap="butt"/></g></svg><svg style="position:absolute;left:66px;top:39px;" width="16" height="16" viewBox="0 0 16 16"><path d="M10.85,2.79 A5.9,5.9 0 1 0 13.25,10.4" fill="none" stroke="#555" stroke-width="2.1"/><polygon points="14.9,0.9 14.9,6.8 9,6.8" fill="#555"/></svg><div style="position:absolute;left:92px;top:33px;width:1760px;height:28px;box-sizing:border-box;border:1px solid #a9a9a9;border-radius:2px;background:#fff"></div><svg style="position:absolute;left:100px;top:39.5px;" width="14" height="14" viewBox="0 0 14 14"><circle cx="7" cy="7" r="6.2" fill="none" stroke="#5a5a5a" stroke-width="1.5"/><rect x="6.1" y="5.8" width="1.8" height="5" fill="#5a5a5a"/><rect x="6.1" y="3" width="1.8" height="1.8" fill="#5a5a5a"/></svg><div id="tfab47b4bb5" class="tx" style="left:121.2px;top:40.37px;font-size:13.5px;line-height:13.5px;color:#000;font-weight:400;font-family:'Liberation Sans', sans-serif;letter-spacing:0.174px;white-space:nowrap">codepen.io</div><div id="t651752e4a3" class="tx" style="left:189.2px;top:40.37px;font-size:13.5px;line-height:13.5px;color:#707070;font-weight:400;font-family:'Liberation Sans', sans-serif;letter-spacing:0.219px;white-space:nowrap">/setter/pen/RGKVZr</div><svg style="position:absolute;left:1829px;top:39px;" width="16" height="16" viewBox="0 0 16 16"><polygon points="8,1.2 10.1,5.8 15,6.2 11.3,9.5 12.4,14.6 8,12 3.6,14.6 4.7,9.5 1,6.2 5.9,5.8" fill="none" stroke="#5a5a5a" stroke-width="1.4" stroke-linejoin="round"/></svg><div style="position:absolute;left:1862px;top:39.5px;width:16px;height:9.5px;background:#f26522;border-radius:1px"></div><svg style="position:absolute;left:1863px;top:40px;" width="14" height="9" viewBox="0 0 14 9"><g fill="#fff"><rect x="1.5" y="5" width="1.2" height="3.5"/><rect x="4.5" y="4" width="1.2" height="2.5"/><rect x="7.5" y="1.5" width="1.2" height="5"/><path d="M9.5,8.5 L12.5,1 L13.5,1.5 L10.5,8.5 Z"/></g></svg><div style="position:absolute;left:1860px;top:50px;width:20px;height:11px;background:#2b7bb9"></div><div id="t476e851d0e" class="tx" style="left:1862px;top:51.38px;font-size:9px;line-height:9px;color:#fff;font-weight:400;font-family:'Liberation Sans', sans-serif;letter-spacing:-0.383px;">0:00</div><div style="position:absolute;left:1900.5px;top:40.5px;width:3.2px;height:3.2px;background:#5a5a5a;border-radius:50%"></div><div style="position:absolute;left:1900.5px;top:45.9px;width:3.2px;height:3.2px;background:#5a5a5a;border-radius:50%"></div><div style="position:absolute;left:1900.5px;top:51.1px;width:3.2px;height:3.2px;background:#5a5a5a;border-radius:50%"></div><div style="position:absolute;left:0px;top:66px;width:1920px;height:64px;background:#000"></div><svg style="position:absolute;left:15px;top:76px;" width="25" height="25" viewBox="0 0 25 25"><g fill="none" stroke="#fff" stroke-width="2.0" stroke-linejoin="round"><polygon points="12.50,1.20 23.80,8.60 23.80,16.40 12.50,23.80 1.20,16.40 1.20,8.60"/><polygon points="12.50,8.60 18.60,12.50 12.50,16.40 6.40,12.50"/><line x1="12.5" y1="1.2" x2="12.5" y2="8.6"/><line x1="12.5" y1="16.4" x2="12.5" y2="23.8"/><line x1="1.2" y1="8.6" x2="23.8" y2="16.4" stroke-opacity="0"/><polyline points="1.20,8.60 6.40,12.50 1.20,16.40"/><polyline points="23.80,8.60 18.60,12.50 23.80,16.40"/></g></svg><div id="t9804275f76" class="tx" style="left:50px;top:78.39px;font-size:18.2px;line-height:18.2px;color:#fff;font-weight:400;font-family:'Liberation Sans', sans-serif;letter-spacing:0.292px;">css animation</div><div id="tf4c378fc56" class="tx" style="left:50px;top:107.13px;font-size:10.6px;line-height:10.6px;color:#a0a0a0;font-weight:400;font-family:'Liberation Sans', sans-serif;letter-spacing:0.463px;">A PEN BY</div><div id="tf2b8ac1137" class="tx" style="left:107px;top:105.39px;font-size:13.6px;line-height:13.6px;color:#fff;font-weight:400;font-family:'Liberation Sans', sans-serif;letter-spacing:-0.153px;">David</div><div style="position:absolute;left:1355px;top:76px;width:90px;height:44px;box-sizing:border-box;border:3px solid #333437;border-radius:3px;background:#000"></div><div style="position:absolute;left:1455px;top:76px;width:114px;height:44px;background:#333437;border-radius:3px"></div><div style="position:absolute;left:1579px;top:76px;width:146px;height:44px;background:#333437;border-radius:3px"></div><div style="position:absolute;left:1735px;top:76px;width:77px;height:44px;background:#333437;border-radius:3px"></div><div style="position:absolute;left:1822px;top:76px;width:88px;height:44px;background:#333437;border-radius:3px"></div><svg style="position:absolute;left:1373px;top:91px;" width="18" height="16" viewBox="0 0 18 16"><g fill="none" stroke="#b4b4b4" stroke-width="2.5"><path d="M1,3.6 L5,3.6 C7.5,3.6 8.2,5 10,8 C12,11 13,12.6 14.9,12.6"/><path d="M8.2,3.6 L14.9,3.6"/></g><circle cx="14.9" cy="3.6" r="2.5" fill="#b4b4b4"/><circle cx="14.9" cy="12.6" r="2.5" fill="#b4b4b4"/></svg><div id="t0a07767fa5" class="tx" style="left:1397px;top:91.30px;font-size:15px;line-height:15px;color:#fff;font-weight:400;font-family:'Liberation Sans', sans-serif;letter-spacing:0.000px;">Fork</div><svg style="position:absolute;left:1473px;top:90px;" width="18" height="18" viewBox="0 0 18 18"><circle cx="9" cy="9" r="6.23" fill="#b9b9b9"/><rect x="7.28" y="0.80" width="3.44" height="8.20" rx="1.03" fill="#b9b9b9" transform="rotate(0.0 9 9)"/><rect x="7.28" y="0.80" width="3.44" height="8.20" rx="1.03" fill="#b9b9b9" transform="rotate(60.0 9 9)"/><rect x="7.28" y="0.80" width="3.44" height="8.20" rx="1.03" fill="#b9b9b9" transform="rotate(120.0 9 9)"/><rect x="7.28" y="0.80" width="3.44" height="8.20" rx="1.03" fill="#b9b9b9" transform="rotate(180.0 9 9)"/><rect x="7.28" y="0.80" width="3.44" height="8.20" rx="1.03" fill="#b9b9b9" transform="rotate(240.0 9 9)"/><rect x="7.28" y="0.80" width="3.44" height="8.20" rx="1.03" fill="#b9b9b9" transform="rotate(300.0 9 9)"/><circle cx="9" cy="9" r="2.46" fill="#333437"/></svg><div id="tfaf1334623" class="tx" style="left:1496px;top:91.30px;font-size:15px;line-height:15px;color:#fff;font-weight:400;font-family:'Liberation Sans', sans-serif;letter-spacing:-0.025px;">Settings</div><svg style="position:absolute;left:1598px;top:92.5px;" width="16" height="13" viewBox="0 0 16 13"><rect x="0.75" y="0.75" width="14.5" height="11.5" fill="none" stroke="#a8a8a8" stroke-width="1.5"/><line x1="1" y1="2.2" x2="15" y2="2.2" stroke="#a8a8a8" stroke-width="1.5"/><ellipse cx="8" cy="7.3" rx="4.6" ry="2.6" fill="#a8a8a8"/><circle cx="8" cy="7.3" r="1.5" fill="#333437"/></svg><div id="te526982791" class="tx" style="left:1620px;top:91.30px;font-size:15px;line-height:15px;color:#fff;font-weight:400;font-family:'Liberation Sans', sans-serif;letter-spacing:-0.270px;">Change View</div><div id="t17c9c059d8" class="tx" style="left:1755px;top:91.30px;font-size:15px;line-height:15px;color:#fff;font-weight:400;font-family:'Liberation Sans', sans-serif;letter-spacing:-0.617px;">Log In</div><div id="t2eda16c4c3" class="tx" style="left:1841px;top:91.30px;font-size:15px;line-height:15px;color:#fff;font-weight:400;font-family:'Liberation Sans', sans-serif;letter-spacing:-0.482px;">Sign Up</div><div style="position:absolute;left:0px;top:130px;width:1920px;height:5px;background:#353537"></div><div style="position:absolute;left:0px;top:135px;width:1920px;height:2px;background:#141415"></div><div style="position:absolute;left:0px;top:135px;width:19px;height:350px;background:#353537"></div><div style="position:absolute;left:0px;top:135px;width:1px;height:350px;background:#4a4a4c"></div><div style="position:absolute;left:19px;top:137px;width:621px;height:348px;background:#1d1e20;overflow:hidden"></div><div style="position:absolute;left:19px;top:170px;width:621px;height:1px;background:#2a2b2d"></div><svg style="position:absolute;left:25px;top:142px;" width="26" height="20" viewBox="0 0 26 20"><rect x="0" y="0" width="26" height="20" rx="3" fill="#2e2f31"/><circle cx="13" cy="10" r="3.60" fill="#fff"/><rect x="12.15" y="5.00" width="1.70" height="5.00" rx="0.51" fill="#fff" transform="rotate(0.0 13 10)"/><rect x="12.15" y="5.00" width="1.70" height="5.00" rx="0.51" fill="#fff" transform="rotate(45.0 13 10)"/><rect x="12.15" y="5.00" width="1.70" height="5.00" rx="0.51" fill="#fff" transform="rotate(90.0 13 10)"/><rect x="12.15" y="5.00" width="1.70" height="5.00" rx="0.51" fill="#fff" transform="rotate(135.0 13 10)"/><rect x="12.15" y="5.00" width="1.70" height="5.00" rx="0.51" fill="#fff" transform="rotate(180.0 13 10)"/><rect x="12.15" y="5.00" width="1.70" height="5.00" rx="0.51" fill="#fff" transform="rotate(225.0 13 10)"/><rect x="12.15" y="5.00" width="1.70" height="5.00" rx="0.51" fill="#fff" transform="rotate(270.0 13 10)"/><rect x="12.15" y="5.00" width="1.70" height="5.00" rx="0.51" fill="#fff" transform="rotate(315.0 13 10)"/><circle cx="13" cy="10" r="1.70" fill="#2e2f31"/></svg><div id="t73d09fd2cc" class="tx" style="left:56px;top:142.54px;font-size:21.8px;line-height:21.8px;color:#d2d2d2;font-weight:700;font-family:'Liberation Sans', sans-serif;transform:scaleX(0.8921);transform-origin:0 0;-webkit-text-stroke:0.6px #d2d2d2;">HTML</div><div id="t8e4dcc3eb8" class="tx" style="left:116px;top:150.10px;font-size:12.4px;line-height:12.4px;color:#bdbdbd;font-weight:400;font-family:'Liberation Sans', sans-serif;letter-spacing:-0.688px;">(Jade)</div><svg style="position:absolute;left:608px;top:142px;" width="26" height="20" viewBox="0 0 26 20"><rect x="0" y="0" width="26" height="20" rx="3" fill="#2e2f31"/><polyline points="8.5,8 13,12.5 17.5,8" fill="none" stroke="#fff" stroke-width="2.2"/></svg><div style="position:absolute;left:640px;top:135px;width:19px;height:350px;background:#353537"></div><div style="position:absolute;left:640px;top:135px;width:1px;height:350px;background:#4a4a4c"></div><div style="position:absolute;left:659px;top:137px;width:621px;height:348px;background:#1d1e20;overflow:hidden"></div><div style="position:absolute;left:659px;top:170px;width:621px;height:1px;background:#2a2b2d"></div><svg style="position:absolute;left:665px;top:142px;" width="26" height="20" viewBox="0 0 26 20"><rect x="0" y="0" width="26" height="20" rx="3" fill="#2e2f31"/><circle cx="13" cy="10" r="3.60" fill="#fff"/><rect x="12.15" y="5.00" width="1.70" height="5.00" rx="0.51" fill="#fff" transform="rotate(0.0 13 10)"/><rect x="12.15" y="5.00" width="1.70" height="5.00" rx="0.51" fill="#fff" transform="rotate(45.0 13 10)"/><rect x="12.15" y="5.00" width="1.70" height="5.00" rx="0.51" fill="#fff" transform="rotate(90.0 13 10)"/><rect x="12.15" y="5.00" width="1.70" height="5.00" rx="0.51" fill="#fff" transform="rotate(135.0 13 10)"/><rect x="12.15" y="5.00" width="1.70" height="5.00" rx="0.51" fill="#fff" transform="rotate(180.0 13 10)"/><rect x="12.15" y="5.00" width="1.70" height="5.00" rx="0.51" fill="#fff" transform="rotate(225.0 13 10)"/><rect x="12.15" y="5.00" width="1.70" height="5.00" rx="0.51" fill="#fff" transform="rotate(270.0 13 10)"/><rect x="12.15" y="5.00" width="1.70" height="5.00" rx="0.51" fill="#fff" transform="rotate(315.0 13 10)"/><circle cx="13" cy="10" r="1.70" fill="#2e2f31"/></svg><div id="te5bbb98949" class="tx" style="left:696px;top:142.54px;font-size:21.8px;line-height:21.8px;color:#d2d2d2;font-weight:700;font-family:'Liberation Sans', sans-serif;transform:scaleX(0.7584);transform-origin:0 0;-webkit-text-stroke:0.6px #d2d2d2;">CSS</div><div id="t56d4e61225" class="tx" style="left:736px;top:150.10px;font-size:12.4px;line-height:12.4px;color:#bdbdbd;font-weight:400;font-family:'Liberation Sans', sans-serif;letter-spacing:-0.969px;">(Sass)</div><svg style="position:absolute;left:1248px;top:142px;" width="26" height="20" viewBox="0 0 26 20"><rect x="0" y="0" width="26" height="20" rx="3" fill="#2e2f31"/><polyline points="8.5,8 13,12.5 17.5,8" fill="none" stroke="#fff" stroke-width="2.2"/></svg><div style="position:absolute;left:1280px;top:135px;width:19px;height:350px;background:#353537"></div><div style="position:absolute;left:1280px;top:135px;width:1px;height:350px;background:#4a4a4c"></div><div style="position:absolute;left:1299px;top:137px;width:621px;height:348px;background:#1d1e20;overflow:hidden"></div><div style="position:absolute;left:1299px;top:170px;width:621px;height:1px;background:#2a2b2d"></div><svg style="position:absolute;left:1305px;top:142px;" width="26" height="20" viewBox="0 0 26 20"><rect x="0" y="0" width="26" height="20" rx="3" fill="#2e2f31"/><circle cx="13" cy="10" r="3.60" fill="#fff"/><rect x="12.15" y="5.00" width="1.70" height="5.00" rx="0.51" fill="#fff" transform="rotate(0.0 13 10)"/><rect x="12.15" y="5.00" width="1.70" height="5.00" rx="0.51" fill="#fff" transform="rotate(45.0 13 10)"/><rect x="12.15" y="5.00" width="1.70" height="5.00" rx="0.51" fill="#fff" transform="rotate(90.0 13 10)"/><rect x="12.15" y="5.00" width="1.70" height="5.00" rx="0.51" fill="#fff" transform="rotate(135.0 13 10)"/><rect x="12.15" y="5.00" width="1.70" height="5.00" rx="0.51" fill="#fff" transform="rotate(180.0 13 10)"/><rect x="12.15" y="5.00" width="1.70" height="5.00" rx="0.51" fill="#fff" transform="rotate(225.0 13 10)"/><rect x="12.15" y="5.00" width="1.70" height="5.00" rx="0.51" fill="#fff" transform="rotate(270.0 13 10)"/><rect x="12.15" y="5.00" width="1.70" height="5.00" rx="0.51" fill="#fff" transform="rotate(315.0 13 10)"/><circle cx="13" cy="10" r="1.70" fill="#2e2f31"/></svg><div id="t3e12365a37" class="tx" style="left:1336px;top:142.54px;font-size:21.8px;line-height:21.8px;color:#d2d2d2;font-weight:700;font-family:'Liberation Sans', sans-serif;transform:scaleX(0.7123);transform-origin:0 0;-webkit-text-stroke:0.6px #d2d2d2;">JS</div><svg style="position:absolute;left:1888px;top:142px;" width="26" height="20" viewBox="0 0 26 20"><rect x="0" y="0" width="26" height="20" rx="3" fill="#2e2f31"/><polyline points="8.5,8 13,12.5 17.5,8" fill="none" stroke="#fff" stroke-width="2.2"/></svg><div style="position:absolute;left:640px;top:135px;width:1px;height:350px;background:#4e4e50"></div><div style="position:absolute;left:1280px;top:135px;width:1px;height:350px;background:#4e4e50"></div><div style="position:absolute;left:0px;top:135px;width:1920px;height:2px;background:#141415"></div><div style="position:absolute;left:19px;top:171px;width:621px;height:314px;overflow:hidden"><div class="tx" style="left:-33px;width:60px;text-align:right;top:9.23px;font-size:13.4px;line-height:13.4px;font-family:'Liberation Mono', monospace;color:#333437">1</div><div class="tx" style="left:44.3px;top:9.23px;font-size:13.4px;line-height:13.4px;font-family:'Liberation Mono', monospace;white-space:pre;letter-spacing:-0.340px;-webkit-text-stroke-width:0.25px"><span style="color:#dccb7f">.trigger</span></div><div class="tx" style="left:-33px;width:60px;text-align:right;top:30.23px;font-size:13.4px;line-height:13.4px;font-family:'Liberation Mono', monospace;color:#333437">2</div><div class="tx" style="left:44.3px;top:30.23px;font-size:13.4px;line-height:13.4px;font-family:'Liberation Mono', monospace;white-space:pre;letter-spacing:-0.340px;-webkit-text-stroke-width:0.25px"><span style="color:#dccb7f">  .box</span></div><div class="tx" style="left:-33px;width:60px;text-align:right;top:51.23px;font-size:13.4px;line-height:13.4px;font-family:'Liberation Mono', monospace;color:#333437">3</div><div class="tx" style="left:44.3px;top:51.23px;font-size:13.4px;line-height:13.4px;font-family:'Liberation Mono', monospace;white-space:pre;letter-spacing:-0.340px;-webkit-text-stroke-width:0.25px"><span style="color:#dccb7f">.trigger</span></div><div class="tx" style="left:-33px;width:60px;text-align:right;top:72.23px;font-size:13.4px;line-height:13.4px;font-family:'Liberation Mono', monospace;color:#333437">4</div><div class="tx" style="left:44.3px;top:72.23px;font-size:13.4px;line-height:13.4px;font-family:'Liberation Mono', monospace;white-space:pre;letter-spacing:-0.340px;-webkit-text-stroke-width:0.25px"><span style="color:#dccb7f">  .box</span></div><div class="tx" style="left:-33px;width:60px;text-align:right;top:93.23px;font-size:13.4px;line-height:13.4px;font-family:'Liberation Mono', monospace;color:#333437">5</div><div class="tx" style="left:44.3px;top:93.23px;font-size:13.4px;line-height:13.4px;font-family:'Liberation Mono', monospace;white-space:pre;letter-spacing:-0.340px;-webkit-text-stroke-width:0.25px"><span style="color:#dccb7f">.trigger</span></div><div class="tx" style="left:-33px;width:60px;text-align:right;top:114.23px;font-size:13.4px;line-height:13.4px;font-family:'Liberation Mono', monospace;color:#333437">6</div><div class="tx" style="left:44.3px;top:114.23px;font-size:13.4px;line-height:13.4px;font-family:'Liberation Mono', monospace;white-space:pre;letter-spacing:-0.340px;-webkit-text-stroke-width:0.25px"><span style="color:#dccb7f">  .box</span></div></div><div style="position:absolute;left:659px;top:171px;width:621px;height:314px;overflow:hidden"><div class="tx" style="left:-33px;width:60px;text-align:right;top:-38.47px;font-size:13.4px;line-height:13.4px;font-family:'Liberation Mono', monospace;color:#333437">10</div><div class="tx" style="left:43.8px;top:-38.47px;font-size:13.4px;line-height:13.4px;font-family:'Liberation Mono', monospace;white-space:pre;letter-spacing:-0.340px;-webkit-text-stroke-width:0.25px"><span style="color:#e0e0e0">  </span><span style="color:#a592b1">display</span><span style="color:#e0e0e0">: </span><span style="color:#dccb7f">inline-block</span></div><div class="tx" style="left:-33px;width:60px;text-align:right;top:-17.47px;font-size:13.4px;line-height:13.4px;font-family:'Liberation Mono', monospace;color:#333437">11</div><div class="tx" style="left:43.8px;top:-17.47px;font-size:13.4px;line-height:13.4px;font-family:'Liberation Mono', monospace;white-space:pre;letter-spacing:-0.340px;-webkit-text-stroke-width:0.25px"><span style="color:#e0e0e0">  </span><span style="color:#a592b1">margin</span><span style="color:#e0e0e0">: </span><span style="color:#dd7c28">20px</span><span style="color:#e0e0e0"> </span><span style="color:#dccb7f">auto</span></div><div class="tx" style="left:-33px;width:60px;text-align:right;top:3.53px;font-size:13.4px;line-height:13.4px;font-family:'Liberation Mono', monospace;color:#333437">12</div><div class="tx" style="left:43.8px;top:3.53px;font-size:13.4px;line-height:13.4px;font-family:'Liberation Mono', monospace;white-space:pre;letter-spacing:-0.340px;-webkit-text-stroke-width:0.25px"><span style="color:#e0e0e0">  </span><span style="color:#a592b1">cursor</span><span style="color:#e0e0e0">: </span><span style="color:#dccb7f">pointer</span></div><div class="tx" style="left:-33px;width:60px;text-align:right;top:24.53px;font-size:13.4px;line-height:13.4px;font-family:'Liberation Mono', monospace;color:#333437">13</div><div class="tx" style="left:43.8px;top:24.53px;font-size:13.4px;line-height:13.4px;font-family:'Liberation Mono', monospace;white-space:pre;letter-spacing:-0.340px;-webkit-text-stroke-width:0.25px"></div><div class="tx" style="left:-33px;width:60px;text-align:right;top:45.53px;font-size:13.4px;line-height:13.4px;font-family:'Liberation Mono', monospace;color:#333437">14</div><div class="tx" style="left:43.8px;top:45.53px;font-size:13.4px;line-height:13.4px;font-family:'Liberation Mono', monospace;white-space:pre;letter-spacing:-0.340px;-webkit-text-stroke-width:0.25px"><span style="color:#dccb7f">.box</span></div><div class="tx" style="left:-33px;width:60px;text-align:right;top:66.53px;font-size:13.4px;line-height:13.4px;font-family:'Liberation Mono', monospace;color:#333437">15</div><div class="tx" style="left:43.8px;top:66.53px;font-size:13.4px;line-height:13.4px;font-family:'Liberation Mono', monospace;white-space:pre;letter-spacing:-0.340px;-webkit-text-stroke-width:0.25px"><span style="color:#e0e0e0">  </span><span style="color:#a592b1">display</span><span style="color:#e0e0e0">: </span><span style="color:#dccb7f">inline-block</span></div><div class="tx" style="left:-33px;width:60px;text-align:right;top:87.53px;font-size:13.4px;line-height:13.4px;font-family:'Liberation Mono', monospace;color:#333437">16</div><div class="tx" style="left:43.8px;top:87.53px;font-size:13.4px;line-height:13.4px;font-family:'Liberation Mono', monospace;white-space:pre;letter-spacing:-0.340px;-webkit-text-stroke-width:0.25px"><span style="color:#e0e0e0">  </span><span style="color:#a592b1">background</span><span style="color:#e0e0e0">: </span><span style="color:#dd7c28">#c5d5cb</span></div><div class="tx" style="left:-33px;width:60px;text-align:right;top:108.53px;font-size:13.4px;line-height:13.4px;font-family:'Liberation Mono', monospace;color:#333437">17</div><div class="tx" style="left:43.8px;top:108.53px;font-size:13.4px;line-height:13.4px;font-family:'Liberation Mono', monospace;white-space:pre;letter-spacing:-0.340px;-webkit-text-stroke-width:0.25px"><span style="color:#e0e0e0">  </span><span style="color:#a592b1">width</span><span style="color:#e0e0e0">: </span><span style="color:#dd7c28">150px</span></div><div class="tx" style="left:-33px;width:60px;text-align:right;top:129.53px;font-size:13.4px;line-height:13.4px;font-family:'Liberation Mono', monospace;color:#333437">18</div><div class="tx" style="left:43.8px;top:129.53px;font-size:13.4px;line-height:13.4px;font-family:'Liberation Mono', monospace;white-space:pre;letter-spacing:-0.340px;-webkit-text-stroke-width:0.25px"><span style="color:#e0e0e0">  </span><span style="color:#a592b1">height</span><span style="color:#e0e0e0">: </span><span style="color:#dd7c28">150px</span></div><div class="tx" style="left:-33px;width:60px;text-align:right;top:150.53px;font-size:13.4px;line-height:13.4px;font-family:'Liberation Mono', monospace;color:#333437">19</div><div class="tx" style="left:43.8px;top:150.53px;font-size:13.4px;line-height:13.4px;font-family:'Liberation Mono', monospace;white-space:pre;letter-spacing:-0.340px;-webkit-text-stroke-width:0.25px"><span style="color:#e0e0e0">  </span><span style="color:#a592b1">border-radius</span><span style="color:#e0e0e0">: </span><span style="color:#dd7c28">50</span><span style="color:#e0e0e0">%</span></div><div class="tx" style="left:-33px;width:60px;text-align:right;top:171.53px;font-size:13.4px;line-height:13.4px;font-family:'Liberation Mono', monospace;color:#333437">20</div><div class="tx" style="left:43.8px;top:171.53px;font-size:13.4px;line-height:13.4px;font-family:'Liberation Mono', monospace;white-space:pre;letter-spacing:-0.340px;-webkit-text-stroke-width:0.25px"><span style="color:#e0e0e0">  </span><span style="color:#a592b1">transition</span><span style="color:#e0e0e0">: </span><span style="color:#dccb7f">transform</span><span style="color:#e0e0e0"> </span><span style="color:#dd7c28">300</span><span style="color:#dccb7f">ms</span><span style="color:#e0e0e0"> </span><span style="color:#dccb7f">ease-in-out</span></div><div class="tx" style="left:-33px;width:60px;text-align:right;top:192.53px;font-size:13.4px;line-height:13.4px;font-family:'Liberation Mono', monospace;color:#333437">21</div><div class="tx" style="left:43.8px;top:192.53px;font-size:13.4px;line-height:13.4px;font-family:'Liberation Mono', monospace;white-space:pre;letter-spacing:-0.340px;-webkit-text-stroke-width:0.25px"><span style="color:#e0e0e0">  </span><span style="color:#a592b1">pointer-events</span><span style="color:#e0e0e0">: </span><span style="color:#dccb7f">none</span></div><div class="tx" style="left:-33px;width:60px;text-align:right;top:213.53px;font-size:13.4px;line-height:13.4px;font-family:'Liberation Mono', monospace;color:#333437">22</div><div class="tx" style="left:43.8px;top:213.53px;font-size:13.4px;line-height:13.4px;font-family:'Liberation Mono', monospace;white-space:pre;letter-spacing:-0.340px;-webkit-text-stroke-width:0.25px"></div><div class="tx" style="left:-33px;width:60px;text-align:right;top:234.53px;font-size:13.4px;line-height:13.4px;font-family:'Liberation Mono', monospace;color:#333437">23</div><div class="tx" style="left:43.8px;top:234.53px;font-size:13.4px;line-height:13.4px;font-family:'Liberation Mono', monospace;white-space:pre;letter-spacing:-0.340px;-webkit-text-stroke-width:0.25px"></div><div class="tx" style="left:-33px;width:60px;text-align:right;top:255.53px;font-size:13.4px;line-height:13.4px;font-family:'Liberation Mono', monospace;color:#333437">24</div><div class="tx" style="left:43.8px;top:255.53px;font-size:13.4px;line-height:13.4px;font-family:'Liberation Mono', monospace;white-space:pre;letter-spacing:-0.340px;-webkit-text-stroke-width:0.25px"><span style="color:#dccb7f">.trigger.clicked .box</span></div><div class="tx" style="left:-33px;width:60px;text-align:right;top:276.53px;font-size:13.4px;line-height:13.4px;font-family:'Liberation Mono', monospace;color:#333437">25</div><div class="tx" style="left:43.8px;top:276.53px;font-size:13.4px;line-height:13.4px;font-family:'Liberation Mono', monospace;white-space:pre;letter-spacing:-0.340px;-webkit-text-stroke-width:0.25px"><span style="color:#e0e0e0">  </span><span style="color:#a592b1">transform</span><span style="color:#e0e0e0">: </span><span style="color:#dccb7f">translate</span><span style="color:#e0e0e0">(</span><span style="color:#dd7c28">0</span><span style="color:#e0e0e0">, </span><span style="color:#dd7c28">160px</span><span style="color:#e0e0e0">) </span><span style="color:#dccb7f">rotate</span><span style="color:#e0e0e0">(</span><span style="color:#dd7c28">30</span><span style="color:#dccb7f">deg</span><span style="color:#e0e0e0">)</span></div></div><div style="position:absolute;left:1271px;top:296px;width:5px;height:188px;background:#6c6c6c"></div><div style="position:absolute;left:1299px;top:171px;width:621px;height:314px;overflow:hidden"><div class="tx" style="left:-33px;width:60px;text-align:right;top:9.23px;font-size:13.4px;line-height:13.4px;font-family:'Liberation Mono', monospace;color:#333437">1</div><div class="tx" style="left:42.8px;top:9.23px;font-size:13.4px;line-height:13.4px;font-family:'Liberation Mono', monospace;white-space:pre;letter-spacing:-0.340px;-webkit-text-stroke-width:0.25px"><span style="color:#dccb7f">$</span><span style="color:#e0e0e0">(</span><span style="color:#a3ab86">'.trigger'</span><span style="color:#e0e0e0">)</span><span style="color:#e0e0e0">.</span><span style="color:#a592b1">on</span><span style="color:#e0e0e0">(</span><span style="color:#a3ab86">'click'</span><span style="color:#e0e0e0">, </span><span style="color:#dccb7f">function</span><span style="color:#e0e0e0">(){</span></div><div class="tx" style="left:-33px;width:60px;text-align:right;top:30.23px;font-size:13.4px;line-height:13.4px;font-family:'Liberation Mono', monospace;color:#333437">2</div><div class="tx" style="left:42.8px;top:30.23px;font-size:13.4px;line-height:13.4px;font-family:'Liberation Mono', monospace;white-space:pre;letter-spacing:-0.340px;-webkit-text-stroke-width:0.25px"><span style="color:#e0e0e0">  </span><span style="color:#dccb7f">$</span><span style="color:#e0e0e0">(</span><span style="color:#dccb7f">this</span><span style="color:#e0e0e0">)</span><span style="color:#e0e0e0">.</span><span style="color:#a592b1">toggleClass</span><span style="color:#e0e0e0">(</span><span style="color:#a3ab86">'clicked'</span><span style="color:#e0e0e0">);</span></div><div class="tx" style="left:-33px;width:60px;text-align:right;top:51.23px;font-size:13.4px;line-height:13.4px;font-family:'Liberation Mono', monospace;color:#333437">3</div><div class="tx" style="left:42.8px;top:51.23px;font-size:13.4px;line-height:13.4px;font-family:'Liberation Mono', monospace;white-space:pre;letter-spacing:-0.340px;-webkit-text-stroke-width:0.25px"><span style="color:#e0e0e0">});</span></div><svg style="position:absolute;left:34px;top:12px;" width="5" height="4" viewBox="0 0 5 4"><polygon points="0,0 5,0 2.5,4" fill="#3e3f41"/></svg></div><div style="position:absolute;left:0px;top:485px;width:1920px;height:16px;background:#343436"></div><div style="position:absolute;left:0px;top:501px;width:1920px;height:1px;background:#000"></div><div style="position:absolute;left:0px;top:502px;width:1920px;height:1px;background:#6a6a6a"></div><div style="position:absolute;left:0px;top:503px;width:1920px;height:497px;background:#fff"></div><div style="position:absolute;left:58px;top:580px;width:160px;height:160px;box-sizing:border-box;border:5px solid #ebd8bf;border-radius:50%;background:#c5d5cb"></div><div style="position:absolute;left:222px;top:580px;width:160px;height:160px;box-sizing:border-box;border:5px solid #ebd8bf;border-radius:50%;background:#e6cf8a"></div><div style="position:absolute;left:227px;top:745px;width:150px;height:150px;border-radius:50%;background:#c5d5cb"></div><div style="position:absolute;left:386px;top:580px;width:160px;height:160px;box-sizing:border-box;border:5px solid #ebd8bf;border-radius:50%;background:#c5d5cb"></div><div style="position:absolute;left:0px;top:1000px;width:1920px;height:40px;background:#343436"></div><div style="position:absolute;left:5px;top:1010px;width:59px;height:21px;background:#131314;border-radius:3px"></div><div id="tbda0d0c456" class="tx" style="left:13px;top:1015.18px;font-size:11.6px;line-height:11.6px;color:#fff;font-weight:400;font-family:'Liberation Sans', sans-serif;letter-spacing:0.065px;">Console</div><div style="position:absolute;left:72px;top:1010px;width:50px;height:21px;background:#131314;border-radius:3px"></div><div id="t57291a721c" class="tx" style="left:80px;top:1015.18px;font-size:11.6px;line-height:11.6px;color:#fff;font-weight:400;font-family:'Liberation Sans', sans-serif;letter-spacing:-0.133px;">Assets</div><div style="position:absolute;left:130px;top:1010px;width:74px;height:21px;background:#131314;border-radius:3px"></div><div id="t4354915cce" class="tx" style="left:138px;top:1015.18px;font-size:11.6px;line-height:11.6px;color:#fff;font-weight:400;font-family:'Liberation Sans', sans-serif;letter-spacing:0.117px;">Comments</div><div style="position:absolute;left:212px;top:1010px;width:66px;height:21px;background:#131314;border-radius:3px"></div><div id="t47fc4de78f" class="tx" style="left:220px;top:1015.18px;font-size:11.6px;line-height:11.6px;color:#fff;font-weight:400;font-family:'Liberation Sans', sans-serif;letter-spacing:0.224px;">Shortcuts</div><div style="position:absolute;left:1742px;top:1010px;width:46px;height:21px;background:#131314;border-radius:3px"></div><div id="t7a724faf32" class="tx" style="left:1750px;top:1015.18px;font-size:11.6px;line-height:11.6px;color:#fff;font-weight:400;font-family:'Liberation Sans', sans-serif;letter-spacing:-0.188px;">Share</div><div style="position:absolute;left:1799px;top:1010px;width:52px;height:21px;background:#131314;border-radius:3px"></div><div id="t10c9bdf545" class="tx" style="left:1807px;top:1015.18px;font-size:11.6px;line-height:11.6px;color:#fff;font-weight:400;font-family:'Liberation Sans', sans-serif;letter-spacing:0.414px;">Export</div><div style="position:absolute;left:1862px;top:1010px;width:52px;height:21px;background:#131314;border-radius:3px"></div><div id="ta988d7e062" class="tx" style="left:1870px;top:1015.18px;font-size:11.6px;line-height:11.6px;color:#fff;font-weight:400;font-family:'Liberation Sans', sans-serif;letter-spacing:-0.147px;">Embed</div><div style="position:absolute;left:819px;top:1012px;width:27px;height:17px;background:#47cf73;border-radius:3px"></div><div id="tbe8093244d" class="tx" style="left:824px;top:1013.39px;font-size:13.6px;line-height:13.6px;color:#fff;font-weight:400;font-family:'Liberation Sans', sans-serif;letter-spacing:0.180px;">Ad</div><div id="te6f6080adc" class="tx" style="left:851px;top:1013.55px;font-size:13.4px;line-height:13.4px;color:#d2d2d2;font-weight:400;font-family:'Liberation Sans', sans-serif;letter-spacing:-0.109px;">Microsoft Azure: Have an app idea and want to see if it'll fly?</div><div style="position:absolute;left:0px;top:1040px;width:1920px;height:40px;background:#05070b"></div><svg style="position:absolute;left:16px;top:1052px;" width="16" height="16" viewBox="0 0 16 16"><g fill="#fff"><polygon points="0,2.3 6.3,1.4 6.3,7.3 0,7.3"/><polygon points="7.7,1.2 16,0 16,7.3 7.7,7.3"/><polygon points="0,8.7 6.3,8.7 6.3,14.6 0,13.7"/><polygon points="7.7,8.7 16,8.7 16,16 7.7,14.8"/></g></svg><svg style="position:absolute;left:63px;top:1051px;" width="18" height="18" viewBox="0 0 18 18"><circle cx="9" cy="9" r="7" fill="none" stroke="#fff" stroke-width="1.8"/></svg><div style="position:absolute;left:343px;top:1040px;width:44px;height:40px;background:#303134"></div><div style="position:absolute;left:387px;top:1040px;width:1px;height:40px;background:#46474a"></div><div style="position:absolute;left:388px;top:1040px;width:3px;height:40px;background:#1e1f22"></div><svg style="position:absolute;left:110px;top:1053px;" width="21" height="15" viewBox="0 0 21 15"><g fill="none" stroke="#fff" stroke-width="1"><rect x="4.5" y="0.5" width="12" height="14"/><polyline points="2.5,2.5 0.5,2.5 0.5,12.5 2.5,12.5"/><polyline points="18.5,2.5 20.5,2.5 20.5,12.5 18.5,12.5"/></g></svg><svg style="position:absolute;left:161px;top:1048.9px;" width="21" height="23" viewBox="0 0 21 23"><ellipse cx="11.6" cy="11.2" rx="8.55" ry="10.85" fill="#0f78d7"/><path d="M7,9.8 C7,6.8 9.2,5.2 11.6,5.2 C14,5.2 16.2,6.8 16.2,9.8 Z" fill="#03050a"/><path d="M21,12.8 L8,12.8 C7.4,13.8 7.5,15 8.3,16 L21,16 Z" fill="#03050a"/><path d="M0.2,10.2 C0.9,6 3.8,2.6 8.6,1.6 L9.2,4.6 C5.2,5.2 2.2,7.2 0.2,10.2 Z" fill="#0f78d7"/><path d="M0.6,10 C2.4,7.4 5,5.6 8.6,5" fill="none" stroke="#03050a" stroke-width="1.1"/></svg><svg style="position:absolute;left:209.25px;top:1051px;" width="22" height="19" viewBox="0 0 22 19"><rect x="0" y="1.2" width="21.5" height="15.2" rx="0.8" fill="#fde18a"/><path d="M0,2.9 L0,0.9 Q0,0 0.9,0 L9.2,0 L10.6,1.6 L10.6,2.9 Z" fill="#f1c232"/><rect x="2.2" y="1" width="4.8" height="1" fill="#bfe3f0"/><path d="M4.2,18 L4.2,11 Q4.2,10 5.2,10 L17.1,10 Q18.1,10 18.1,11 L18.1,18 L14,18 L14,13.3 L8.2,13.3 L8.2,18 Z" fill="#35aee8"/></svg><svg style="position:absolute;left:257.8px;top:1048.15px;" width="23" height="24" viewBox="0 0 23 24"><polygon points="0.2,6 4,4 8.4,7.1 16.6,0 22.1,2 22.1,23.7 0.2,23.7" fill="#68217a"/><path d="M1.33,6.86 L3.98,5.75 L8.63,10.18 L16.8,1.99 L20.6,2.88 L20.6,19.7 L16.8,21.5 L8.63,14.4 L3.98,16.8 L1.33,15.7 Z M3.98,9.07 L3.98,14 L7.08,11.5 Z M12.2,11.5 L16.8,15.5 L16.8,7.52 Z" fill="#fff" fill-rule="evenodd"/></svg><svg style="position:absolute;left:306px;top:1048px;" width="25" height="25" viewBox="0 0 25 25"><defs><linearGradient id="tcyl" x1="0" x2="1"><stop offset="0" stop-color="#f0c030"/><stop offset="0.4" stop-color="#fbe07a"/><stop offset="0.6" stop-color="#f3b51c"/><stop offset="1" stop-color="#d99000"/></linearGradient></defs><rect x="0.7" y="0" width="7.1" height="10.4" rx="1.6" fill="url(#tcyl)"/><ellipse cx="4.25" cy="1.4" rx="3.3" ry="1.3" fill="#fff3b0"/><g fill="#5cc84a"><rect x="10.8" y="1" width="5.5" height="1.2"/><rect x="18" y="1" width="1.2" height="1.2"/><rect x="18" y="3.4" width="1.2" height="1.2"/><rect x="18" y="5.5" width="1.2" height="3.6"/><rect x="0.4" y="13.5" width="1.2" height="1.5"/><rect x="0.4" y="16" width="1.2" height="1.2"/><rect x="0.4" y="18.2" width="1.2" height="1.2"/><rect x="3" y="18.2" width="1.2" height="1.2"/><rect x="5" y="18.2" width="3.8" height="1.2"/></g><line x1="8.6" y1="13.6" x2="19.8" y2="22.8" stroke="#b9c3cf" stroke-width="2.3" stroke-linecap="round"/><path d="M4.8,11.8 A3.2,3.2 0 1 0 10.5,14.2 L8.6,13.6 L7.4,11 Z" fill="#c8d0da"/><line x1="8.6" y1="23" x2="16.5" y2="15.6" stroke="#e3b33a" stroke-width="2" stroke-linecap="round"/><path d="M12.5,12.8 L15.5,10.6 L21.8,16.8 L20.2,18.8 L16.8,16.2 Z" fill="#dfe6ee"/><path d="M18.5,16.5 L21.8,16.8 L20.2,18.8 Z" fill="#8d9aa8"/></svg><svg style="position:absolute;left:0;top:0" width="1920" height="1080"><path d="M367,1060 L357.04,1054.25 A11.5,11.5 0 0 1 377.81,1056.07 Z" fill="#db4437"/><path d="M367,1060 L377.81,1056.07 A11.5,11.5 0 0 1 365.00,1071.33 Z" fill="#f4c20d"/><path d="M367,1060 L365.00,1071.33 A11.5,11.5 0 0 1 357.04,1054.25 Z" fill="#0f9d58"/><circle cx="367" cy="1060" r="5.29" fill="#fff"/><circle cx="367" cy="1060" r="4.14" fill="#4285f4"/><defs><linearGradient id="ffo" x1="0" y1="0" x2="1" y2="0.3"><stop offset="0" stop-color="#e2481b"/><stop offset="0.6" stop-color="#f27a20"/><stop offset="1" stop-color="#ffd52e"/></linearGradient><linearGradient id="ffb" x1="0" y1="0" x2="0" y2="1"><stop offset="0" stop-color="#5fcaf4"/><stop offset="0.55" stop-color="#2a87d0"/><stop offset="1" stop-color="#173a88"/></linearGradient></defs><circle cx="416" cy="1060" r="11.3" fill="url(#ffo)"/><circle cx="416.9" cy="1057.4" r="8.4" fill="url(#ffb)"/><polygon points="405.10,1054.70 406.10,1051.80 408.30,1050.90 410.55,1053.10 412.80,1052.50 413.60,1055.80 415.00,1056.20 412.80,1059.10 411.00,1060.00 412.80,1062.20 417.20,1061.70 418.10,1063.10 414.50,1065.30 420.70,1065.10 423.40,1062.20 423.80,1066.70 416.80,1070.70 408.80,1067.70 404.80,1060.70" fill="#ee6a20"/><path d="M421.3,1050.2 Q425.3,1053.7 424.0,1063.2 Q423.3,1056.7 421.3,1050.2 Z" fill="#fff6c0" fill-opacity="0.85"/><circle cx="465" cy="1060" r="12" fill="#1ed760"/><g fill="none" stroke="#111" stroke-linecap="round"><path d="M457.5,1056.5 Q465,1053.5 472.5,1057.5" stroke-width="2.4"/><path d="M458.5,1060.3 Q465,1058 471.5,1061" stroke-width="2"/><path d="M459.5,1063.8 Q465,1062 470.5,1064.5" stroke-width="1.7"/></g></svg><div style="position:absolute;left:200px;top:1078px;width:40px;height:2px;background:#76b9ed"></div><div style="position:absolute;left:249px;top:1078px;width:40px;height:2px;background:#76b9ed"></div><div style="position:absolute;left:343px;top:1078px;width:48px;height:2px;background:#76b9ed"></div><div style="position:absolute;left:396px;top:1078px;width:40px;height:2px;background:#76b9ed"></div><div style="position:absolute;left:445px;top:1078px;width:40px;height:2px;background:#76b9ed"></div><div id="ta182b27c66" class="tx" style="left:1863.5px;top:1044.74px;font-size:12px;line-height:12px;color:#fff;font-weight:400;font-family:'Liberation Sans', sans-serif;letter-spacing:-0.277px;">10:24 AM</div><div id="tcc9d84f186" class="tx" style="left:1862px;top:1062.74px;font-size:12px;line-height:12px;color:#fff;font-weight:400;font-family:'Liberation Sans', sans-serif;letter-spacing:-0.155px;">9/23/2016</div></div></body></html>
